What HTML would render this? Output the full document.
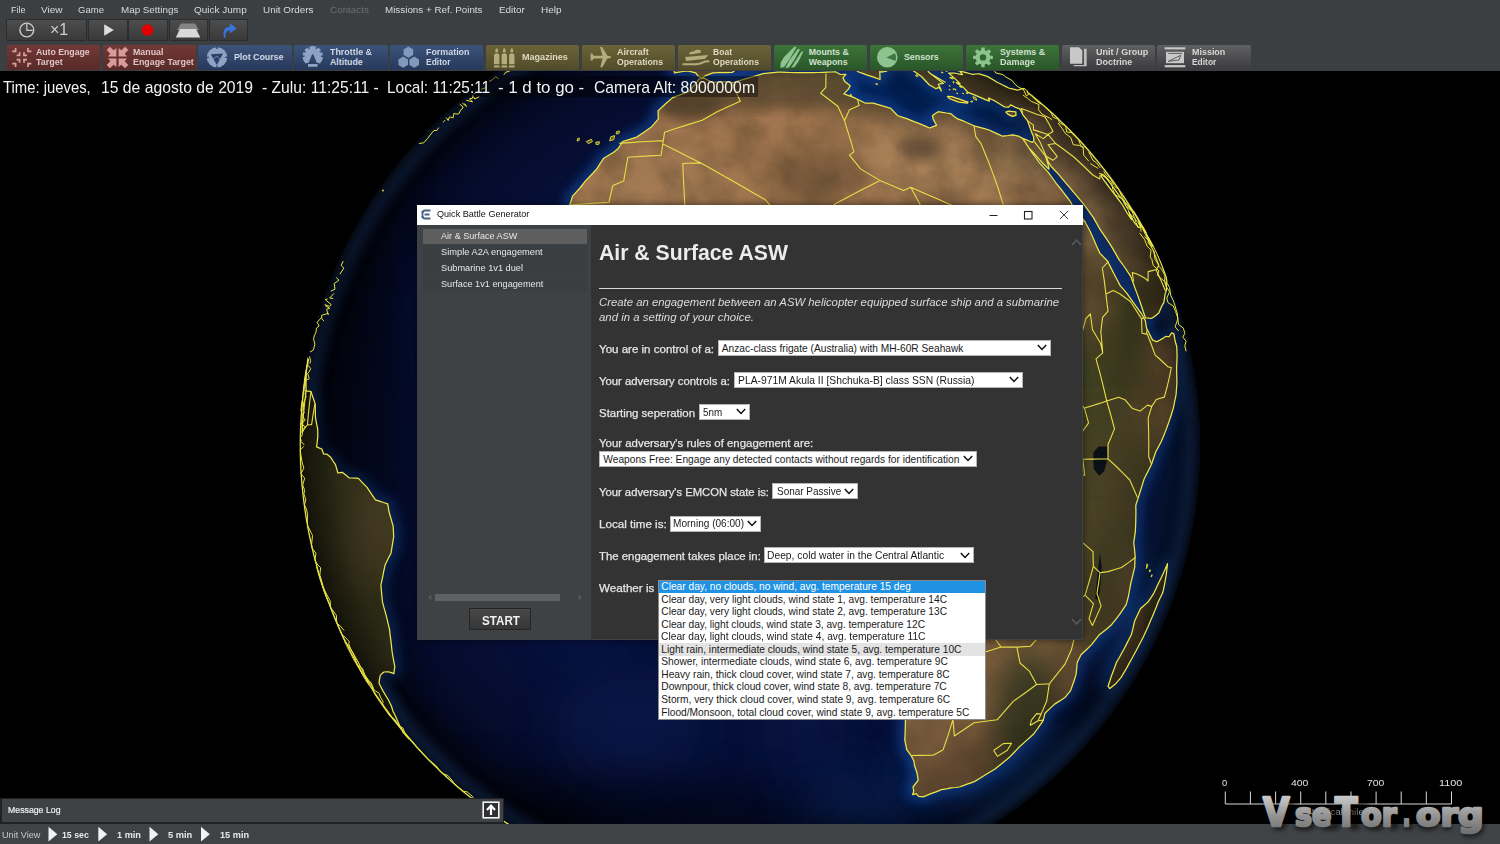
<!DOCTYPE html>
<html><head><meta charset="utf-8"><title>Quick Battle Generator</title>
<style>
html,body{margin:0;padding:0;}
body{width:1500px;height:844px;overflow:hidden;background:#000;position:relative;font-family:"Liberation Sans",sans-serif;}
.abs{position:absolute;}
.t{position:absolute;white-space:pre;line-height:1;transform-origin:0 0;}
#topbar{position:absolute;left:0;top:0;width:1500px;height:70.5px;background:#3c3f42;}
.tb{position:absolute;top:19px;height:22px;background:linear-gradient(#4d4d4d,#3a3a3a);border:1px solid #2c2c2c;box-sizing:border-box;border-radius:1px;}
.cb{position:absolute;top:45.2px;height:25.3px;width:93.3px;box-sizing:border-box;border-radius:2px 2px 0 0;}
.red{background:linear-gradient(#723836,#572b29);}
.blue{background:linear-gradient(#3c537a,#27395b);}
.olive{background:linear-gradient(#6b6439,#514b2a);}
.green{background:linear-gradient(#3d7439,#295629);}
.grey{background:linear-gradient(#606062,#3c3c3e);}
#timebg{position:absolute;left:0;top:76px;width:758px;height:21px;background:rgba(0,0,0,0.42);}
#dlg{position:absolute;left:417px;top:205px;width:666px;height:435px;background:#3f4245;box-shadow:0 0 7px rgba(0,0,0,0.55);}
#dtitle{position:absolute;left:0;top:0;width:666px;height:20px;background:#fff;}
#lpanel{position:absolute;left:1px;top:20px;width:173px;height:414px;background:#3f4245;}
#rpanel{position:absolute;left:174px;top:20px;width:491px;height:414px;background:#333;}
.li{position:absolute;left:423px;width:164px;height:15px;background:#3b3e41;}
.sel{position:absolute;height:16px;background:#fff;border:1px solid #b5b5b5;box-sizing:border-box;}
.sel svg{position:absolute;right:3px;top:3.5px;}
</style></head>
<body>
<svg id="globe" width="1500" height="844" viewBox="0 0 1500 844" style="position:absolute;left:0;top:0">
<defs>
<clipPath id="gc"><circle cx="749.5" cy="445.2" r="450.6"/></clipPath>
<clipPath id="lc"><path d="M699.0 79.0 L704.4 78.2 L711.9 82.4 L718.2 82.0 L724.5 81.5 L732.6 82.7 L737.1 81.3 L741.7 80.0 L746.2 78.7 L751.8 77.0 L757.5 75.3 L763.0 73.7 L767.9 73.1 L772.9 72.6 L777.8 72.1 L782.4 72.2 L786.9 72.3 L791.5 72.5 L796.1 72.6 L801.2 72.6 L806.3 72.7 L811.5 72.7 L819.0 72.5 L823.2 72.3 L827.3 72.1 L831.3 72.0 L835.4 71.8 L840.3 74.5 L845.9 74.4 L842.9 77.8 L844.8 81.6 L850.2 85.8 L848.6 88.9 L843.9 93.9 L848.7 95.6 L853.5 97.4 L859.5 100.2 L865.5 103.2 L873.2 103.2 L879.1 104.9 L885.0 106.6 L890.8 108.4 L897.4 115.5 L902.1 117.1 L906.8 118.7 L913.4 121.3 L920.1 123.9 L924.9 125.9 L929.6 128.0 L933.1 126.6 L936.5 125.3 L933.2 119.1 L932.5 115.6 L935.4 113.6 L938.2 111.7 L942.3 112.3 L946.4 113.0 L950.5 113.6 L957.1 118.7 L963.8 121.2 L968.9 123.5 L974.0 125.8 L977.8 126.8 L981.6 127.9 L985.3 128.9 L989.0 130.0 L993.6 132.1 L998.1 134.1 L1002.6 136.2 L1005.3 135.8 L1008.0 135.5 L1010.6 135.1 L1013.1 134.8 L1018.7 136.2 L1022.6 138.4 L1025.9 143.4 L1029.3 148.5 L1031.9 152.5 L1035.6 157.5 L1039.3 162.6 L1043.9 167.6 L1048.5 172.7 L1052.4 178.0 L1056.2 183.4 L1060.0 188.0 L1063.6 192.7 L1067.3 197.5 L1070.9 202.3 L1073.0 206.7 L1075.1 211.2 L1079.5 215.5 L1083.7 219.8 L1087.0 225.5 L1090.1 231.2 L1093.0 237.8 L1095.9 244.4 L1099.8 253.1 L1103.7 257.1 L1107.4 261.0 L1111.1 268.1 L1114.7 275.2 L1117.4 280.3 L1120.0 285.4 L1123.5 289.4 L1126.9 293.4 L1130.8 298.8 L1134.7 304.3 L1138.3 309.3 L1141.8 314.2 L1145.3 320.6 L1146.6 328.4 L1149.6 334.2 L1152.6 340.1 L1154.7 340.9 L1156.7 341.8 L1158.4 340.9 L1160.0 340.0 L1161.5 339.1 L1163.0 338.2 L1164.4 337.3 L1165.7 336.4 L1167.5 336.5 L1169.2 336.5 L1170.5 334.7 L1171.7 332.9 L1173.8 333.6 L1175.1 341.0 L1176.8 346.8 L1176.9 351.3 L1177.1 355.8 L1176.9 362.1 L1176.6 368.6 L1176.7 373.3 L1176.8 378.0 L1176.9 382.8 L1176.5 388.5 L1176.1 394.3 L1174.8 401.0 L1173.4 407.9 L1172.0 412.5 L1170.5 417.2 L1168.9 421.9 L1167.2 426.7 L1165.4 431.4 L1163.5 436.2 L1161.5 441.0 L1158.8 446.2 L1155.9 451.5 L1153.7 457.8 L1151.5 464.2 L1147.8 471.7 L1144.0 479.3 L1142.4 484.6 L1140.7 490.0 L1138.3 497.6 L1135.8 505.2 L1135.9 512.5 L1135.8 519.8 L1135.6 526.0 L1135.3 532.2 L1134.5 537.4 L1133.7 542.6 L1134.5 549.0 L1135.1 555.4 L1134.9 561.3 L1134.7 567.2 L1133.5 572.2 L1132.3 577.3 L1131.0 582.3 L1130.1 587.1 L1129.2 592.0 L1128.3 596.8 L1126.2 604.6 L1119.8 614.2 L1115.6 619.7 L1111.2 625.1 L1107.3 628.4 L1103.2 631.7 L1099.0 635.1 L1091.6 644.6 L1086.4 649.7 L1081.0 654.8 L1077.2 662.5 L1076.7 668.5 L1076.1 674.4 L1074.3 680.0 L1072.4 685.5 L1070.5 690.9 L1064.9 697.6 L1059.8 700.9 L1054.6 704.1 L1049.8 708.6 L1045.0 713.2 L1044.0 717.1 L1043.0 720.9 L1040.0 725.2 L1037.0 729.5 L1033.9 733.7 L1030.9 736.5 L1025.2 741.6 L1019.5 746.7 L1014.3 752.2 L1009.1 757.6 L1001.9 763.4 L994.7 769.2 L986.7 774.0 L980.8 777.7 L974.8 781.4 L971.0 782.8 L967.1 784.2 L963.3 785.6 L959.4 787.0 L955.3 787.5 L951.1 787.9 L946.4 788.8 L941.6 789.6 L936.0 791.8 L930.4 793.9 L923.4 796.9 L918.6 796.4 L916.2 793.6 L912.7 794.7 L913.7 790.8 L913.0 787.0 L918.1 780.3 L917.6 776.6 L917.0 772.8 L915.8 769.3 L914.6 765.8 L913.8 760.7 L911.1 755.6 L906.7 749.7 L905.8 744.9 L904.8 740.1 L905.0 735.6 L905.2 731.0 L905.3 726.3 L905.4 721.9 L905.5 717.5 L905.5 712.9 L905.4 708.3 L904.8 701.9 L901.7 697.4 L899.2 691.3 L896.7 685.1 L895.1 680.2 L893.4 675.3 L891.7 670.3 L890.0 664.6 L888.3 658.8 L886.5 653.0 L887.2 647.1 L887.9 641.1 L890.1 635.6 L892.4 630.0 L894.4 624.1 L896.5 618.0 L898.6 612.0 L904.1 606.1 L909.6 600.2 L912.6 592.1 L915.5 583.9 L914.4 577.0 L913.3 570.1 L912.2 563.0 L910.9 556.0 L909.2 548.3 L907.3 540.6 L904.9 532.2 L902.4 523.7 L901.6 515.2 L897.1 508.0 L889.2 497.0 L883.5 490.9 L877.6 484.7 L871.7 478.5 L867.0 467.3 L862.2 457.3 L868.3 451.0 L869.5 443.5 L871.9 434.8 L874.2 424.8 L874.8 418.5 L875.3 412.3 L874.0 405.4 L872.6 398.6 L862.9 391.0 L855.6 392.2 L847.7 392.8 L839.8 393.4 L833.6 393.9 L827.5 394.5 L819.9 383.3 L814.2 376.4 L808.5 369.5 L801.7 368.9 L794.9 368.2 L788.6 368.8 L782.4 369.4 L774.9 370.6 L767.4 371.8 L758.7 375.5 L749.9 379.3 L743.6 382.4 L737.3 385.5 L726.0 389.3 L714.7 384.3 L708.5 383.1 L702.2 381.9 L696.0 382.5 L689.8 383.2 L682.9 385.1 L676.1 387.0 L669.5 389.1 L662.9 391.3 L656.3 393.4 L645.5 386.0 L638.3 381.7 L631.2 377.5 L625.3 373.9 L619.5 370.3 L611.6 363.1 L605.9 360.1 L600.2 357.2 L596.5 350.6 L592.9 344.1 L590.4 338.2 L588.0 332.3 L583.3 326.6 L578.8 320.9 L574.9 315.2 L569.3 305.0 L563.7 302.4 L558.1 299.8 L558.0 291.9 L560.6 287.3 L559.5 279.6 L552.9 274.5 L558.8 268.7 L565.3 259.6 L568.1 254.1 L571.0 248.6 L572.4 242.7 L573.8 236.8 L573.4 230.2 L573.0 223.6 L572.5 215.6 L568.7 210.0 L569.7 205.0 L572.5 196.2 L580.0 188.0 L585.3 181.1 L590.9 175.2 L596.5 169.3 L600.1 163.7 L603.7 158.2 L613.6 152.2 L618.2 148.5 L622.6 141.5 L629.6 139.3 L636.7 137.1 L643.9 132.2 L651.0 127.3 L654.7 123.2 L658.3 119.1 L658.2 114.9 L658.1 110.8 L664.8 104.5 L672.6 97.6 L681.3 94.4 L689.0 91.3 L692.4 87.4 L695.6 83.7Z M1167.5 563.7 L1166.9 569.5 L1166.2 575.2 L1165.4 579.6 L1164.6 584.1 L1163.7 588.5 L1162.7 592.8 L1158.3 601.8 L1156.4 606.7 L1154.4 611.7 L1152.4 616.6 L1150.2 621.6 L1148.0 626.7 L1145.7 631.7 L1143.4 636.7 L1141.1 641.2 L1138.7 645.8 L1136.4 650.3 L1133.9 654.8 L1131.5 659.3 L1128.9 663.9 L1126.3 668.6 L1123.6 673.1 L1120.9 677.7 L1115.4 684.1 L1112.6 686.3 L1109.8 688.5 L1108.9 687.3 L1108.0 686.2 L1109.9 680.8 L1111.6 675.4 L1113.3 671.1 L1114.9 666.7 L1116.5 662.3 L1119.2 657.7 L1121.8 653.0 L1124.4 648.3 L1126.8 643.6 L1129.1 639.0 L1131.5 634.2 L1132.6 629.9 L1133.6 625.5 L1134.6 621.1 L1137.6 614.8 L1140.5 608.5 L1143.2 606.2 L1145.8 603.9 L1148.3 601.7 L1151.2 597.4 L1153.9 593.1 L1156.5 587.5 L1159.1 582.0 L1161.8 576.4 L1164.5 570.8Z M1029.3 148.5 L1025.9 143.4 L1022.6 138.4 L1025.9 139.7 L1029.1 141.0 L1032.3 142.3 L1033.9 140.9 L1033.6 136.7 L1031.5 132.0 L1030.3 128.6 L1029.1 125.3 L1027.4 120.6 L1023.1 115.2 L1021.5 112.0 L1019.8 108.9 L1016.3 107.7 L1010.6 104.9 L1008.7 107.2 L1004.6 107.0 L999.4 103.7 L994.0 100.5 L988.5 98.0 L989.4 101.2 L984.8 99.3 L980.2 97.4 L974.4 94.9 L967.9 92.4 L963.2 87.2 L956.3 82.7 L960.1 83.6 L954.9 78.6 L948.6 73.0 L951.3 73.0 L954.0 73.0 L956.8 73.5 L959.6 74.1 L962.4 74.6 L959.8 71.1 L963.1 71.9 L966.3 72.7 L969.5 73.5 L972.6 74.3 L974.4 74.1 L976.1 74.0 L977.9 73.9 L979.5 73.9 L982.3 74.8 L985.1 75.7 L987.8 76.6 L992.7 79.5 L997.5 82.5 L1000.3 83.8 L1003.1 85.2 L1005.9 86.6 L1008.6 88.0 L1010.2 88.4 L1011.8 88.7 L1013.3 89.1 L1014.8 89.4 L1016.3 89.8 L1017.7 90.2 L1018.4 90.0 L1019.1 89.7 L1019.7 89.5 L1020.3 89.4 L1020.8 89.2 L1021.3 89.0 L1021.8 88.8 L1022.2 88.8 L1022.7 88.7 L1023.1 88.6 L1023.4 88.6 L1023.7 88.5 L1024.0 88.5 L1024.2 88.5 L1024.4 88.4 L1024.5 88.4 L1024.6 88.4 L1025.8 89.3 L1027.1 90.2 L1027.4 92.2 L1028.6 93.2 L1029.7 94.1 L1030.9 95.0 L1032.0 95.8 L1033.0 96.7 L1034.1 97.6 L1035.1 98.4 L1036.1 99.3 L1037.1 100.1 L1038.1 100.9 L1039.1 101.7 L1040.0 102.5 L1040.9 103.3 L1041.8 104.1 L1042.7 104.8 L1043.5 105.5 L1044.4 106.3 L1046.7 108.3 L1048.9 110.3 L1051.2 112.3 L1053.4 114.3 L1055.6 116.3 L1057.7 118.3 L1059.8 120.4 L1061.9 122.4 L1064.0 124.4 L1066.1 126.4 L1068.1 128.4 L1070.1 130.5 L1072.0 132.5 L1074.0 134.5 L1075.9 136.5 L1077.8 138.5 L1079.7 140.5 L1081.5 142.5 L1083.3 144.5 L1085.1 146.5 L1087.7 149.5 L1090.3 152.5 L1092.9 155.5 L1095.4 158.6 L1098.0 161.7 L1100.5 164.8 L1102.9 167.9 L1105.4 171.0 L1107.8 174.2 L1110.2 177.4 L1112.6 180.6 L1114.9 183.9 L1117.3 187.2 L1119.5 190.5 L1121.8 193.8 L1124.0 197.1 L1126.3 200.5 L1128.4 203.9 L1130.6 207.3 L1132.7 210.7 L1134.8 214.2 L1136.9 217.7 L1138.9 221.2 L1140.9 224.7 L1142.9 228.3 L1144.8 231.8 L1146.8 235.4 L1148.6 239.0 L1150.5 242.6 L1152.3 246.3 L1151.9 245.5 L1151.5 244.7 L1151.1 243.8 L1150.7 243.0 L1150.2 242.1 L1149.8 241.2 L1149.3 240.3 L1149.0 239.8 L1148.8 239.3 L1148.5 238.8 L1148.2 238.2 L1147.9 237.6 L1147.6 237.1 L1147.3 236.4 L1147.0 235.8 L1146.6 235.2 L1145.9 233.9 L1146.4 231.9 L1145.7 230.6 L1144.9 229.3 L1144.1 227.9 L1143.2 226.6 L1142.2 225.3 L1141.2 223.9 L1138.8 219.7 L1136.2 215.5 L1133.7 211.3 L1133.4 211.5 L1133.1 211.7 L1132.7 212.0 L1130.7 209.4 L1128.7 206.8 L1126.6 204.2 L1124.4 201.6 L1122.1 199.1 L1119.8 196.5 L1116.7 192.3 L1113.7 188.0 L1110.0 183.0 L1106.2 178.0 L1104.0 176.2 L1101.8 174.4 L1101.0 175.7 L1103.3 179.4 L1106.8 184.0 L1110.2 188.6 L1114.4 194.1 L1118.5 199.5 L1122.6 205.0 L1124.8 209.0 L1127.1 213.0 L1131.6 219.6 L1130.3 215.9 L1129.0 212.2 L1131.6 217.2 L1134.2 222.3 L1136.2 224.7 L1138.2 227.1 L1139.2 227.3 L1140.1 227.5 L1140.9 227.7 L1139.3 223.0 L1138.3 220.3 L1137.2 217.7 L1140.0 222.7 L1142.8 227.8 L1145.4 232.3 L1148.0 236.9 L1149.5 239.1 L1150.9 241.4 L1153.7 246.6 L1156.3 251.8 L1157.9 255.5 L1159.5 259.2 L1161.0 262.9 L1162.4 266.7 L1164.3 271.9 L1166.1 277.1 L1166.5 279.3 L1166.9 281.6 L1166.7 282.6 L1166.4 283.6 L1166.5 285.5 L1166.5 287.5 L1166.5 289.5 L1166.1 291.1 L1165.6 292.7 L1165.0 294.4 L1164.7 297.0 L1164.3 299.7 L1163.9 302.4 L1162.8 304.4 L1161.6 306.4 L1160.7 308.6 L1159.8 310.8 L1158.8 313.1 L1157.5 314.1 L1156.2 315.2 L1154.8 316.2 L1153.3 317.3 L1151.8 318.3 L1149.1 318.2 L1146.4 318.0 L1145.5 317.8 L1143.3 311.8 L1141.7 306.8 L1140.0 301.8 L1138.3 296.9 L1135.0 288.1 L1132.9 282.2 L1130.7 276.4 L1124.5 267.0 L1119.0 259.6 L1116.2 254.6 L1113.3 249.6 L1110.3 244.7 L1107.0 239.7 L1103.6 234.7 L1100.2 229.7 L1096.8 223.6 L1093.4 217.6 L1088.9 211.3 L1084.4 205.1 L1080.3 200.2 L1076.3 195.4 L1068.9 186.7 L1063.6 180.3 L1058.2 173.9 L1051.9 167.3 L1048.3 162.2 L1046.1 156.3 L1045.5 156.2 L1046.7 159.8 L1047.8 163.4 L1048.9 167.1 L1048.9 169.2 L1042.9 163.5 L1038.1 158.1 L1031.3 150.4Z M674.5 72.8 L678.9 72.2 L683.2 71.5 L687.6 70.9 L691.6 71.9 L695.7 72.9 L698.5 76.5 L701.8 77.6 L707.5 74.9 L713.0 72.9 L719.1 72.7 L725.2 72.6 L732.2 72.5 L737.6 68.2 L745.4 66.9 L749.3 63.7 L753.1 60.6 L748.9 56.2 L751.9 53.5 L754.9 50.9 L757.8 48.4 L762.5 47.3 L767.2 46.3 L771.8 45.2 L776.4 44.3 L775.6 41.0 L774.7 37.8 L779.5 37.9 L784.3 38.1 L789.1 38.3 L792.7 38.0 L796.3 37.7 L799.9 37.5 L803.5 37.2 L807.0 37.0 L810.4 36.4 L813.7 35.8 L817.0 35.2 L821.4 37.4 L825.8 39.8 L830.4 42.2 L835.6 44.5 L841.0 47.0 L846.4 49.5 L851.2 51.4 L856.2 53.4 L861.1 55.3 L866.0 57.2 L870.9 59.1 L875.8 61.0 L878.3 63.9 L880.8 66.8 L881.1 69.5 L881.3 72.2 L886.6 71.2 L889.1 67.8 L882.6 63.4 L883.9 59.6 L889.7 62.1 L895.4 64.7 L895.3 62.2 L890.8 60.1 L886.3 58.0 L881.9 56.0 L877.4 54.0 L873.0 52.1 L869.0 50.8 L864.9 49.5 L860.9 48.2 L856.9 47.0 L853.7 44.2 L850.6 41.5 L846.0 39.8 L841.5 38.1 L839.9 35.8 L838.3 33.5 L842.7 33.4 L847.0 33.3 L853.4 35.5 L857.4 37.9 L861.5 40.4 L866.3 42.3 L871.1 44.3 L875.9 46.4 L880.1 48.1 L884.3 49.8 L888.6 51.6 L896.7 55.5 L899.0 59.0 L901.3 62.6 L909.9 68.4 L915.5 72.3 L921.1 76.3 L925.2 80.5 L929.2 84.7 L936.0 88.7 L938.5 87.4 L941.0 89.5 L938.3 84.2 L943.4 83.5 L936.3 78.1 L928.8 72.2 L927.0 69.4 L925.1 66.8 L928.1 66.7 L931.1 66.6 L935.0 67.2 L938.8 67.9 L942.6 68.6 L946.7 71.3 L948.4 69.1 L951.9 69.7 L955.3 70.2 L958.7 70.8 L949.9 65.4 L945.1 61.6 L945.4 59.8 L945.7 58.1 L945.2 56.3 L944.7 54.6 L944.1 52.9 L941.8 50.7 L939.5 48.5 L937.2 46.5 L934.9 44.5 L932.6 42.5 L930.3 40.6 L928.0 38.8 L925.6 37.0 L923.3 35.3 L920.4 34.2 L917.4 33.1 L914.5 32.1 L911.5 31.1 L908.6 30.0 L905.6 29.0 L902.6 28.0 L899.7 27.1 L896.7 26.1 L893.7 25.2 L890.7 24.2 L887.7 23.3 L884.7 22.4 L881.7 21.6 L878.7 20.7 L875.7 19.9 L872.6 19.0 L869.6 18.2 L866.6 17.4 L863.6 16.6 L860.6 15.9 L857.6 15.1 L854.6 14.4 L851.6 13.6 L848.6 12.9 L845.6 12.3 L842.6 11.6 L839.6 10.9 L836.6 10.3 L833.7 9.7 L830.7 9.1 L827.8 8.5 L824.8 7.9 L821.9 7.4 L819.0 6.8 L816.0 6.3 L813.1 5.8 L810.2 5.3 L807.4 4.8 L804.5 4.4 L802.2 4.4 L799.8 4.5 L797.4 4.6 L794.9 4.7 L792.4 4.9 L789.9 5.0 L787.3 5.2 L784.7 5.4 L782.1 5.6 L779.4 5.8 L776.7 6.0 L774.0 6.3 L771.2 6.5 L768.4 6.8 L765.6 7.1 L762.7 7.4 L759.8 7.8 L756.9 8.1 L753.9 8.5 L750.9 8.9 L747.9 9.3 L744.8 9.7 L741.7 10.2 L738.6 10.6 L735.4 11.1 L732.3 11.6 L729.1 12.1 L725.8 12.7 L722.6 13.3 L719.3 13.8 L719.9 15.3 L720.5 16.9 L721.2 18.5 L724.5 19.7 L728.0 20.9 L731.5 22.2 L735.1 23.6 L738.8 25.0 L742.6 26.4 L741.7 28.4 L740.7 30.5 L739.7 32.6 L738.7 34.8 L737.6 37.1 L733.7 37.0 L729.8 37.0 L725.9 37.0 L722.1 37.0 L718.2 37.0 L714.4 37.0 L710.5 37.0 L706.7 37.1 L702.9 37.2 L699.1 37.2 L695.3 37.3 L691.5 37.5 L686.6 39.3 L681.6 41.2 L681.7 43.4 L681.9 45.7 L682.1 48.1 L682.3 50.5 L679.8 53.4 L677.4 56.4 L674.9 59.5 L672.4 62.6 L673.1 66.0 L673.8 69.4Z M855.3 69.4 L862.0 69.0 L866.5 69.3 L870.9 69.6 L875.3 70.0 L879.7 70.4 L879.9 74.0 L880.0 77.7 L880.0 79.5 L872.9 76.9 L868.1 75.3 L863.3 73.6 L858.6 72.0Z M816.6 51.0 L820.2 50.5 L823.9 50.0 L829.0 53.8 L829.7 57.2 L830.4 60.7 L825.9 61.5 L820.8 60.1 L819.9 57.1 L819.1 54.2Z M947.5 96.4 L952.0 96.7 L956.1 98.1 L960.2 99.4 L964.2 100.8 L968.0 102.2 L967.4 103.2 L963.2 102.7 L958.9 102.1 L954.1 100.3 L949.3 98.5Z M1005.9 112.0 L1008.5 111.2 L1011.0 111.4 L1013.5 111.6 L1015.9 111.9 L1015.9 115.4 L1014.1 115.9 L1012.2 116.4 L1007.8 114.1Z M307.6 357.9 L307.4 359.7 L307.3 361.6 L306.7 365.8 L306.1 370.1 L306.2 371.9 L306.4 373.8 L306.1 378.9 L306.0 384.0 L306.1 391.0 L306.7 391.0 L307.4 391.0 L308.1 391.0 L308.9 391.1 L309.9 391.3 L311.0 391.5 L311.8 394.1 L312.7 396.8 L313.7 399.4 L315.2 404.0 L315.3 410.7 L315.5 417.5 L316.5 423.3 L317.7 429.1 L317.8 437.0 L317.2 442.0 L316.6 446.9 L318.3 447.6 L320.1 448.3 L321.9 449.0 L323.6 454.0 L325.2 454.1 L327.0 454.2 L328.8 455.7 L330.7 457.3 L333.0 461.0 L335.5 464.7 L337.9 473.0 L340.0 472.6 L342.2 472.3 L344.5 474.1 L346.9 476.0 L349.3 477.9 L352.3 478.0 L355.3 478.2 L358.4 478.4 L361.2 481.4 L364.1 484.4 L367.1 487.4 L371.2 493.6 L375.5 499.8 L379.5 501.1 L383.5 502.5 L387.7 503.8 L389.0 511.5 L391.0 518.7 L393.1 525.9 L393.4 531.3 L393.7 536.6 L392.8 542.2 L391.9 547.7 L391.0 553.2 L388.0 559.0 L385.2 564.7 L383.8 571.0 L382.6 577.3 L380.9 584.8 L381.4 590.6 L381.9 596.4 L382.5 602.2 L383.9 607.4 L385.4 612.6 L386.8 617.8 L388.2 623.9 L389.6 629.9 L390.2 635.7 L391.0 641.4 L391.6 647.0 L392.2 652.5 L393.0 657.2 L393.9 661.9 L394.8 666.6 L394.3 670.2 L393.9 673.7 L391.2 672.7 L388.6 671.8 L386.3 671.9 L384.0 672.0 L382.7 673.1 L381.5 674.1 L380.4 675.1 L379.9 677.0 L379.6 678.8 L379.3 680.7 L379.1 683.5 L381.1 687.3 L383.1 691.1 L385.7 695.5 L388.3 699.8 L391.4 706.0 L392.9 711.0 L395.3 715.8 L396.6 718.8 L397.9 721.7 L399.6 725.5 L401.3 728.3 L403.0 731.0 L404.7 733.7 L405.9 735.5 L407.1 737.4 L408.3 739.1 L406.8 737.6 L405.4 736.0 L404.0 734.4 L402.7 732.9 L402.5 730.5 L401.2 729.0 L404.5 733.0 L407.8 736.9 L413.0 742.8 L415.6 745.7 L418.2 748.6 L420.8 751.5 L421.1 751.7 L421.3 752.0 L421.6 752.3 L421.9 752.6 L421.3 752.0 L420.7 751.4 L420.2 750.8 L419.7 750.2 L419.2 749.7 L422.3 753.0 L425.4 756.3 L428.6 759.6 L428.0 759.0 L427.5 758.4 L426.9 757.9 L426.4 757.4 L425.9 756.9 L429.2 760.2 L432.5 763.6 L435.9 766.9 L438.2 769.1 L440.6 771.4 L443.0 773.6 L445.4 775.8 L447.8 778.0 L449.3 779.4 L450.8 780.8 L452.3 782.1 L453.9 783.5 L457.6 786.7 L461.2 789.8 L465.0 792.9 L467.3 794.7 L469.6 796.6 L471.9 798.4 L474.3 800.3 L476.7 802.1 L479.1 803.9 L483.8 807.4 L488.5 810.8 L491.9 813.2 L495.3 815.6 L498.8 818.0 L502.3 820.3 L505.8 822.6 L509.3 824.9 L508.2 824.1 L507.0 823.4 L505.9 822.7 L504.8 822.0 L503.7 821.3 L502.6 820.5 L501.6 819.8 L500.5 819.1 L499.5 818.4 L498.5 817.8 L497.5 817.1 L496.5 816.4 L495.5 815.7 L494.5 815.1 L491.7 813.1 L488.8 811.1 L486.0 809.1 L483.2 807.0 L480.4 805.0 L477.7 802.9 L475.0 800.8 L472.3 798.7 L469.6 796.6 L467.0 794.5 L464.4 792.4 L461.8 790.2 L459.2 788.1 L456.7 785.9 L454.2 783.7 L451.7 781.5 L448.7 778.9 L445.7 776.2 L442.8 773.5 L439.9 770.7 L437.0 767.9 L434.1 765.1 L431.3 762.3 L428.4 759.4 L425.7 756.6 L422.9 753.7 L420.2 750.7 L417.4 747.8 L414.8 744.8 L412.1 741.8 L409.5 738.8 L406.9 735.8 L404.3 732.7 L401.7 729.6 L399.2 726.5 L396.7 723.4 L394.3 720.2 L391.8 717.1 L389.4 713.9 L387.1 710.6 L384.7 707.4 L382.4 704.2 L380.1 700.9 L377.9 697.6 L375.6 694.3 L373.4 691.0 L371.3 687.6 L369.1 684.3 L367.0 680.9 L365.0 677.5 L362.9 674.1 L360.9 670.7 L359.0 667.2 L357.0 663.8 L355.1 660.4 L353.3 656.9 L351.4 653.5 L349.6 650.0 L347.9 646.5 L346.1 642.9 L344.4 639.4 L342.7 635.9 L341.1 632.3 L339.4 628.7 L337.9 625.1 L336.3 621.5 L334.8 617.9 L333.3 614.2 L331.8 610.6 L330.4 606.9 L329.0 603.3 L327.6 599.6 L326.3 595.9 L325.0 592.2 L323.7 588.4 L322.5 584.7 L321.3 581.0 L320.1 577.2 L318.9 573.5 L317.8 569.7 L316.8 565.9 L315.7 562.1 L314.7 558.3 L313.7 554.5 L312.8 550.7 L311.9 546.8 L311.0 543.0 L310.2 539.2 L309.4 535.3 L308.6 531.4 L307.9 527.6 L307.2 523.7 L306.5 519.8 L305.9 516.0 L305.3 512.1 L304.7 508.2 L304.2 504.3 L303.7 500.4 L303.2 496.5 L302.8 492.5 L302.4 488.6 L302.0 484.7 L301.7 480.8 L301.4 476.9 L301.1 472.9 L300.9 469.0 L300.7 465.1 L300.5 461.1 L300.4 457.2 L300.3 453.3 L300.3 449.3 L300.3 445.4 L300.3 441.5 L300.3 437.5 L300.4 433.6 L300.5 429.7 L300.7 425.7 L300.9 421.7 L301.1 417.8 L301.4 413.8 L301.6 409.8 L302.0 405.8 L302.4 401.8 L302.8 397.7 L303.2 393.7 L303.7 389.6 L304.2 385.6 L304.8 381.5 L305.4 377.4 L306.0 373.3 L306.7 369.1 L307.5 365.0 L307.5 364.8 L307.5 364.6 L307.6 364.5 L307.6 364.3 L307.6 364.1 L307.7 363.9 L307.7 363.7 L307.8 363.4 L307.8 363.2 L307.8 363.0 L307.9 362.7 L307.9 362.5 L308.0 362.2 L308.0 362.0 L308.1 361.7 L308.1 361.4 L308.2 361.1 L308.2 360.8 L308.3 360.5 L308.4 360.2 L308.4 359.9 L308.5 359.5 L307.2 358.9 L307.3 358.6 L307.5 358.2Z"/></clipPath>
<radialGradient id="og" cx="50%" cy="50%" r="50%"><stop offset="0" stop-color="#081340"/><stop offset="0.7" stop-color="#060f36"/><stop offset="0.9" stop-color="#040a28"/><stop offset="1" stop-color="#01030c"/></radialGradient>
<radialGradient id="lg" cx="50%" cy="50%" r="50%"><stop offset="0" stop-color="#000" stop-opacity="0"/><stop offset="0.84" stop-color="#000" stop-opacity="0"/><stop offset="0.93" stop-color="#000" stop-opacity="0.25"/><stop offset="0.975" stop-color="#000" stop-opacity="0.6"/><stop offset="1" stop-color="#000" stop-opacity="0.95"/></radialGradient>
<radialGradient id="lg2" cx="50%" cy="50%" r="50%"><stop offset="0" stop-color="#000" stop-opacity="0"/><stop offset="0.78" stop-color="#000" stop-opacity="0"/><stop offset="0.92" stop-color="#000" stop-opacity="0.28"/><stop offset="1" stop-color="#000" stop-opacity="0.7"/></radialGradient>
<filter id="nz" x="0" y="0" width="100%" height="100%"><feTurbulence type="fractalNoise" baseFrequency="0.03" numOctaves="4" seed="7"/><feColorMatrix type="matrix" values="0 0 0 0 0.08  0 0 0 0 0.05  0 0 0 0 0.02  1.6 1.2 0 0 -1.05"/></filter>
<filter id="b6" x="-30%" y="-30%" width="160%" height="160%"><feGaussianBlur stdDeviation="6"/></filter>
<filter id="b14" x="-50%" y="-50%" width="200%" height="200%"><feGaussianBlur stdDeviation="14"/></filter>
<filter id="b25" x="-50%" y="-50%" width="200%" height="200%"><feGaussianBlur stdDeviation="25"/></filter>
</defs>
<g clip-path="url(#gc)">
<circle cx="749.5" cy="445.2" r="450.6" fill="url(#og)"/>
<ellipse cx="582" cy="510" rx="50" ry="150" fill="#0e2060" opacity="0.4" filter="url(#b25)"/>
<ellipse cx="627" cy="729" rx="70" ry="60" fill="#0e2060" opacity="0.35" filter="url(#b25)"/>
<ellipse cx="711" cy="839" rx="120" ry="30" fill="#0d1f5c" opacity="0.3" filter="url(#b25)"/>
<ellipse cx="473" cy="332" rx="50" ry="70" fill="#0d1f5c" opacity="0.3" filter="url(#b25)"/>
<ellipse cx="805" cy="732" rx="40" ry="70" fill="#0c1d56" opacity="0.3" filter="url(#b25)"/>
<ellipse cx="856" cy="812" rx="60" ry="40" fill="#103070" opacity="0.45" filter="url(#b25)"/>
<ellipse cx="906" cy="90" rx="150" ry="16" fill="#0d3a86" opacity="0.9" filter="url(#b25)"/>
<ellipse cx="997" cy="116" rx="60" ry="14" fill="#0d3a86" opacity="0.8" filter="url(#b25)"/>
<ellipse cx="1125" cy="628" rx="30" ry="90" fill="#123c82" opacity="0.65" filter="url(#b25)"/>
<ellipse cx="1040" cy="773" rx="140" ry="50" fill="#11377a" opacity="0.6" filter="url(#b25)"/>
<ellipse cx="1182" cy="524" rx="40" ry="160" fill="#10326f" opacity="0.45" filter="url(#b25)"/>
<ellipse cx="1185" cy="353" rx="30" ry="60" fill="#10326f" opacity="0.4" filter="url(#b25)"/>
<path d="M699.0 79.0 L704.4 78.2 L711.9 82.4 L718.2 82.0 L724.5 81.5 L732.6 82.7 L737.1 81.3 L741.7 80.0 L746.2 78.7 L751.8 77.0 L757.5 75.3 L763.0 73.7 L767.9 73.1 L772.9 72.6 L777.8 72.1 L782.4 72.2 L786.9 72.3 L791.5 72.5 L796.1 72.6 L801.2 72.6 L806.3 72.7 L811.5 72.7 L819.0 72.5 L823.2 72.3 L827.3 72.1 L831.3 72.0 L835.4 71.8 L840.3 74.5 L845.9 74.4 L842.9 77.8 L844.8 81.6 L850.2 85.8 L848.6 88.9 L843.9 93.9 L848.7 95.6 L853.5 97.4 L859.5 100.2 L865.5 103.2 L873.2 103.2 L879.1 104.9 L885.0 106.6 L890.8 108.4 L897.4 115.5 L902.1 117.1 L906.8 118.7 L913.4 121.3 L920.1 123.9 L924.9 125.9 L929.6 128.0 L933.1 126.6 L936.5 125.3 L933.2 119.1 L932.5 115.6 L935.4 113.6 L938.2 111.7 L942.3 112.3 L946.4 113.0 L950.5 113.6 L957.1 118.7 L963.8 121.2 L968.9 123.5 L974.0 125.8 L977.8 126.8 L981.6 127.9 L985.3 128.9 L989.0 130.0 L993.6 132.1 L998.1 134.1 L1002.6 136.2 L1005.3 135.8 L1008.0 135.5 L1010.6 135.1 L1013.1 134.8 L1018.7 136.2 L1022.6 138.4 L1025.9 143.4 L1029.3 148.5 L1031.9 152.5 L1035.6 157.5 L1039.3 162.6 L1043.9 167.6 L1048.5 172.7 L1052.4 178.0 L1056.2 183.4 L1060.0 188.0 L1063.6 192.7 L1067.3 197.5 L1070.9 202.3 L1073.0 206.7 L1075.1 211.2 L1079.5 215.5 L1083.7 219.8 L1087.0 225.5 L1090.1 231.2 L1093.0 237.8 L1095.9 244.4 L1099.8 253.1 L1103.7 257.1 L1107.4 261.0 L1111.1 268.1 L1114.7 275.2 L1117.4 280.3 L1120.0 285.4 L1123.5 289.4 L1126.9 293.4 L1130.8 298.8 L1134.7 304.3 L1138.3 309.3 L1141.8 314.2 L1145.3 320.6 L1146.6 328.4 L1149.6 334.2 L1152.6 340.1 L1154.7 340.9 L1156.7 341.8 L1158.4 340.9 L1160.0 340.0 L1161.5 339.1 L1163.0 338.2 L1164.4 337.3 L1165.7 336.4 L1167.5 336.5 L1169.2 336.5 L1170.5 334.7 L1171.7 332.9 L1173.8 333.6 L1175.1 341.0 L1176.8 346.8 L1176.9 351.3 L1177.1 355.8 L1176.9 362.1 L1176.6 368.6 L1176.7 373.3 L1176.8 378.0 L1176.9 382.8 L1176.5 388.5 L1176.1 394.3 L1174.8 401.0 L1173.4 407.9 L1172.0 412.5 L1170.5 417.2 L1168.9 421.9 L1167.2 426.7 L1165.4 431.4 L1163.5 436.2 L1161.5 441.0 L1158.8 446.2 L1155.9 451.5 L1153.7 457.8 L1151.5 464.2 L1147.8 471.7 L1144.0 479.3 L1142.4 484.6 L1140.7 490.0 L1138.3 497.6 L1135.8 505.2 L1135.9 512.5 L1135.8 519.8 L1135.6 526.0 L1135.3 532.2 L1134.5 537.4 L1133.7 542.6 L1134.5 549.0 L1135.1 555.4 L1134.9 561.3 L1134.7 567.2 L1133.5 572.2 L1132.3 577.3 L1131.0 582.3 L1130.1 587.1 L1129.2 592.0 L1128.3 596.8 L1126.2 604.6 L1119.8 614.2 L1115.6 619.7 L1111.2 625.1 L1107.3 628.4 L1103.2 631.7 L1099.0 635.1 L1091.6 644.6 L1086.4 649.7 L1081.0 654.8 L1077.2 662.5 L1076.7 668.5 L1076.1 674.4 L1074.3 680.0 L1072.4 685.5 L1070.5 690.9 L1064.9 697.6 L1059.8 700.9 L1054.6 704.1 L1049.8 708.6 L1045.0 713.2 L1044.0 717.1 L1043.0 720.9 L1040.0 725.2 L1037.0 729.5 L1033.9 733.7 L1030.9 736.5 L1025.2 741.6 L1019.5 746.7 L1014.3 752.2 L1009.1 757.6 L1001.9 763.4 L994.7 769.2 L986.7 774.0 L980.8 777.7 L974.8 781.4 L971.0 782.8 L967.1 784.2 L963.3 785.6 L959.4 787.0 L955.3 787.5 L951.1 787.9 L946.4 788.8 L941.6 789.6 L936.0 791.8 L930.4 793.9 L923.4 796.9 L918.6 796.4 L916.2 793.6 L912.7 794.7 L913.7 790.8 L913.0 787.0 L918.1 780.3 L917.6 776.6 L917.0 772.8 L915.8 769.3 L914.6 765.8 L913.8 760.7 L911.1 755.6 L906.7 749.7 L905.8 744.9 L904.8 740.1 L905.0 735.6 L905.2 731.0 L905.3 726.3 L905.4 721.9 L905.5 717.5 L905.5 712.9 L905.4 708.3 L904.8 701.9 L901.7 697.4 L899.2 691.3 L896.7 685.1 L895.1 680.2 L893.4 675.3 L891.7 670.3 L890.0 664.6 L888.3 658.8 L886.5 653.0 L887.2 647.1 L887.9 641.1 L890.1 635.6 L892.4 630.0 L894.4 624.1 L896.5 618.0 L898.6 612.0 L904.1 606.1 L909.6 600.2 L912.6 592.1 L915.5 583.9 L914.4 577.0 L913.3 570.1 L912.2 563.0 L910.9 556.0 L909.2 548.3 L907.3 540.6 L904.9 532.2 L902.4 523.7 L901.6 515.2 L897.1 508.0 L889.2 497.0 L883.5 490.9 L877.6 484.7 L871.7 478.5 L867.0 467.3 L862.2 457.3 L868.3 451.0 L869.5 443.5 L871.9 434.8 L874.2 424.8 L874.8 418.5 L875.3 412.3 L874.0 405.4 L872.6 398.6 L862.9 391.0 L855.6 392.2 L847.7 392.8 L839.8 393.4 L833.6 393.9 L827.5 394.5 L819.9 383.3 L814.2 376.4 L808.5 369.5 L801.7 368.9 L794.9 368.2 L788.6 368.8 L782.4 369.4 L774.9 370.6 L767.4 371.8 L758.7 375.5 L749.9 379.3 L743.6 382.4 L737.3 385.5 L726.0 389.3 L714.7 384.3 L708.5 383.1 L702.2 381.9 L696.0 382.5 L689.8 383.2 L682.9 385.1 L676.1 387.0 L669.5 389.1 L662.9 391.3 L656.3 393.4 L645.5 386.0 L638.3 381.7 L631.2 377.5 L625.3 373.9 L619.5 370.3 L611.6 363.1 L605.9 360.1 L600.2 357.2 L596.5 350.6 L592.9 344.1 L590.4 338.2 L588.0 332.3 L583.3 326.6 L578.8 320.9 L574.9 315.2 L569.3 305.0 L563.7 302.4 L558.1 299.8 L558.0 291.9 L560.6 287.3 L559.5 279.6 L552.9 274.5 L558.8 268.7 L565.3 259.6 L568.1 254.1 L571.0 248.6 L572.4 242.7 L573.8 236.8 L573.4 230.2 L573.0 223.6 L572.5 215.6 L568.7 210.0 L569.7 205.0 L572.5 196.2 L580.0 188.0 L585.3 181.1 L590.9 175.2 L596.5 169.3 L600.1 163.7 L603.7 158.2 L613.6 152.2 L618.2 148.5 L622.6 141.5 L629.6 139.3 L636.7 137.1 L643.9 132.2 L651.0 127.3 L654.7 123.2 L658.3 119.1 L658.2 114.9 L658.1 110.8 L664.8 104.5 L672.6 97.6 L681.3 94.4 L689.0 91.3 L692.4 87.4 L695.6 83.7Z M1167.5 563.7 L1166.9 569.5 L1166.2 575.2 L1165.4 579.6 L1164.6 584.1 L1163.7 588.5 L1162.7 592.8 L1158.3 601.8 L1156.4 606.7 L1154.4 611.7 L1152.4 616.6 L1150.2 621.6 L1148.0 626.7 L1145.7 631.7 L1143.4 636.7 L1141.1 641.2 L1138.7 645.8 L1136.4 650.3 L1133.9 654.8 L1131.5 659.3 L1128.9 663.9 L1126.3 668.6 L1123.6 673.1 L1120.9 677.7 L1115.4 684.1 L1112.6 686.3 L1109.8 688.5 L1108.9 687.3 L1108.0 686.2 L1109.9 680.8 L1111.6 675.4 L1113.3 671.1 L1114.9 666.7 L1116.5 662.3 L1119.2 657.7 L1121.8 653.0 L1124.4 648.3 L1126.8 643.6 L1129.1 639.0 L1131.5 634.2 L1132.6 629.9 L1133.6 625.5 L1134.6 621.1 L1137.6 614.8 L1140.5 608.5 L1143.2 606.2 L1145.8 603.9 L1148.3 601.7 L1151.2 597.4 L1153.9 593.1 L1156.5 587.5 L1159.1 582.0 L1161.8 576.4 L1164.5 570.8Z M1029.3 148.5 L1025.9 143.4 L1022.6 138.4 L1025.9 139.7 L1029.1 141.0 L1032.3 142.3 L1033.9 140.9 L1033.6 136.7 L1031.5 132.0 L1030.3 128.6 L1029.1 125.3 L1027.4 120.6 L1023.1 115.2 L1021.5 112.0 L1019.8 108.9 L1016.3 107.7 L1010.6 104.9 L1008.7 107.2 L1004.6 107.0 L999.4 103.7 L994.0 100.5 L988.5 98.0 L989.4 101.2 L984.8 99.3 L980.2 97.4 L974.4 94.9 L967.9 92.4 L963.2 87.2 L956.3 82.7 L960.1 83.6 L954.9 78.6 L948.6 73.0 L951.3 73.0 L954.0 73.0 L956.8 73.5 L959.6 74.1 L962.4 74.6 L959.8 71.1 L963.1 71.9 L966.3 72.7 L969.5 73.5 L972.6 74.3 L974.4 74.1 L976.1 74.0 L977.9 73.9 L979.5 73.9 L982.3 74.8 L985.1 75.7 L987.8 76.6 L992.7 79.5 L997.5 82.5 L1000.3 83.8 L1003.1 85.2 L1005.9 86.6 L1008.6 88.0 L1010.2 88.4 L1011.8 88.7 L1013.3 89.1 L1014.8 89.4 L1016.3 89.8 L1017.7 90.2 L1018.4 90.0 L1019.1 89.7 L1019.7 89.5 L1020.3 89.4 L1020.8 89.2 L1021.3 89.0 L1021.8 88.8 L1022.2 88.8 L1022.7 88.7 L1023.1 88.6 L1023.4 88.6 L1023.7 88.5 L1024.0 88.5 L1024.2 88.5 L1024.4 88.4 L1024.5 88.4 L1024.6 88.4 L1025.8 89.3 L1027.1 90.2 L1027.4 92.2 L1028.6 93.2 L1029.7 94.1 L1030.9 95.0 L1032.0 95.8 L1033.0 96.7 L1034.1 97.6 L1035.1 98.4 L1036.1 99.3 L1037.1 100.1 L1038.1 100.9 L1039.1 101.7 L1040.0 102.5 L1040.9 103.3 L1041.8 104.1 L1042.7 104.8 L1043.5 105.5 L1044.4 106.3 L1046.7 108.3 L1048.9 110.3 L1051.2 112.3 L1053.4 114.3 L1055.6 116.3 L1057.7 118.3 L1059.8 120.4 L1061.9 122.4 L1064.0 124.4 L1066.1 126.4 L1068.1 128.4 L1070.1 130.5 L1072.0 132.5 L1074.0 134.5 L1075.9 136.5 L1077.8 138.5 L1079.7 140.5 L1081.5 142.5 L1083.3 144.5 L1085.1 146.5 L1087.7 149.5 L1090.3 152.5 L1092.9 155.5 L1095.4 158.6 L1098.0 161.7 L1100.5 164.8 L1102.9 167.9 L1105.4 171.0 L1107.8 174.2 L1110.2 177.4 L1112.6 180.6 L1114.9 183.9 L1117.3 187.2 L1119.5 190.5 L1121.8 193.8 L1124.0 197.1 L1126.3 200.5 L1128.4 203.9 L1130.6 207.3 L1132.7 210.7 L1134.8 214.2 L1136.9 217.7 L1138.9 221.2 L1140.9 224.7 L1142.9 228.3 L1144.8 231.8 L1146.8 235.4 L1148.6 239.0 L1150.5 242.6 L1152.3 246.3 L1151.9 245.5 L1151.5 244.7 L1151.1 243.8 L1150.7 243.0 L1150.2 242.1 L1149.8 241.2 L1149.3 240.3 L1149.0 239.8 L1148.8 239.3 L1148.5 238.8 L1148.2 238.2 L1147.9 237.6 L1147.6 237.1 L1147.3 236.4 L1147.0 235.8 L1146.6 235.2 L1145.9 233.9 L1146.4 231.9 L1145.7 230.6 L1144.9 229.3 L1144.1 227.9 L1143.2 226.6 L1142.2 225.3 L1141.2 223.9 L1138.8 219.7 L1136.2 215.5 L1133.7 211.3 L1133.4 211.5 L1133.1 211.7 L1132.7 212.0 L1130.7 209.4 L1128.7 206.8 L1126.6 204.2 L1124.4 201.6 L1122.1 199.1 L1119.8 196.5 L1116.7 192.3 L1113.7 188.0 L1110.0 183.0 L1106.2 178.0 L1104.0 176.2 L1101.8 174.4 L1101.0 175.7 L1103.3 179.4 L1106.8 184.0 L1110.2 188.6 L1114.4 194.1 L1118.5 199.5 L1122.6 205.0 L1124.8 209.0 L1127.1 213.0 L1131.6 219.6 L1130.3 215.9 L1129.0 212.2 L1131.6 217.2 L1134.2 222.3 L1136.2 224.7 L1138.2 227.1 L1139.2 227.3 L1140.1 227.5 L1140.9 227.7 L1139.3 223.0 L1138.3 220.3 L1137.2 217.7 L1140.0 222.7 L1142.8 227.8 L1145.4 232.3 L1148.0 236.9 L1149.5 239.1 L1150.9 241.4 L1153.7 246.6 L1156.3 251.8 L1157.9 255.5 L1159.5 259.2 L1161.0 262.9 L1162.4 266.7 L1164.3 271.9 L1166.1 277.1 L1166.5 279.3 L1166.9 281.6 L1166.7 282.6 L1166.4 283.6 L1166.5 285.5 L1166.5 287.5 L1166.5 289.5 L1166.1 291.1 L1165.6 292.7 L1165.0 294.4 L1164.7 297.0 L1164.3 299.7 L1163.9 302.4 L1162.8 304.4 L1161.6 306.4 L1160.7 308.6 L1159.8 310.8 L1158.8 313.1 L1157.5 314.1 L1156.2 315.2 L1154.8 316.2 L1153.3 317.3 L1151.8 318.3 L1149.1 318.2 L1146.4 318.0 L1145.5 317.8 L1143.3 311.8 L1141.7 306.8 L1140.0 301.8 L1138.3 296.9 L1135.0 288.1 L1132.9 282.2 L1130.7 276.4 L1124.5 267.0 L1119.0 259.6 L1116.2 254.6 L1113.3 249.6 L1110.3 244.7 L1107.0 239.7 L1103.6 234.7 L1100.2 229.7 L1096.8 223.6 L1093.4 217.6 L1088.9 211.3 L1084.4 205.1 L1080.3 200.2 L1076.3 195.4 L1068.9 186.7 L1063.6 180.3 L1058.2 173.9 L1051.9 167.3 L1048.3 162.2 L1046.1 156.3 L1045.5 156.2 L1046.7 159.8 L1047.8 163.4 L1048.9 167.1 L1048.9 169.2 L1042.9 163.5 L1038.1 158.1 L1031.3 150.4Z M674.5 72.8 L678.9 72.2 L683.2 71.5 L687.6 70.9 L691.6 71.9 L695.7 72.9 L698.5 76.5 L701.8 77.6 L707.5 74.9 L713.0 72.9 L719.1 72.7 L725.2 72.6 L732.2 72.5 L737.6 68.2 L745.4 66.9 L749.3 63.7 L753.1 60.6 L748.9 56.2 L751.9 53.5 L754.9 50.9 L757.8 48.4 L762.5 47.3 L767.2 46.3 L771.8 45.2 L776.4 44.3 L775.6 41.0 L774.7 37.8 L779.5 37.9 L784.3 38.1 L789.1 38.3 L792.7 38.0 L796.3 37.7 L799.9 37.5 L803.5 37.2 L807.0 37.0 L810.4 36.4 L813.7 35.8 L817.0 35.2 L821.4 37.4 L825.8 39.8 L830.4 42.2 L835.6 44.5 L841.0 47.0 L846.4 49.5 L851.2 51.4 L856.2 53.4 L861.1 55.3 L866.0 57.2 L870.9 59.1 L875.8 61.0 L878.3 63.9 L880.8 66.8 L881.1 69.5 L881.3 72.2 L886.6 71.2 L889.1 67.8 L882.6 63.4 L883.9 59.6 L889.7 62.1 L895.4 64.7 L895.3 62.2 L890.8 60.1 L886.3 58.0 L881.9 56.0 L877.4 54.0 L873.0 52.1 L869.0 50.8 L864.9 49.5 L860.9 48.2 L856.9 47.0 L853.7 44.2 L850.6 41.5 L846.0 39.8 L841.5 38.1 L839.9 35.8 L838.3 33.5 L842.7 33.4 L847.0 33.3 L853.4 35.5 L857.4 37.9 L861.5 40.4 L866.3 42.3 L871.1 44.3 L875.9 46.4 L880.1 48.1 L884.3 49.8 L888.6 51.6 L896.7 55.5 L899.0 59.0 L901.3 62.6 L909.9 68.4 L915.5 72.3 L921.1 76.3 L925.2 80.5 L929.2 84.7 L936.0 88.7 L938.5 87.4 L941.0 89.5 L938.3 84.2 L943.4 83.5 L936.3 78.1 L928.8 72.2 L927.0 69.4 L925.1 66.8 L928.1 66.7 L931.1 66.6 L935.0 67.2 L938.8 67.9 L942.6 68.6 L946.7 71.3 L948.4 69.1 L951.9 69.7 L955.3 70.2 L958.7 70.8 L949.9 65.4 L945.1 61.6 L945.4 59.8 L945.7 58.1 L945.2 56.3 L944.7 54.6 L944.1 52.9 L941.8 50.7 L939.5 48.5 L937.2 46.5 L934.9 44.5 L932.6 42.5 L930.3 40.6 L928.0 38.8 L925.6 37.0 L923.3 35.3 L920.4 34.2 L917.4 33.1 L914.5 32.1 L911.5 31.1 L908.6 30.0 L905.6 29.0 L902.6 28.0 L899.7 27.1 L896.7 26.1 L893.7 25.2 L890.7 24.2 L887.7 23.3 L884.7 22.4 L881.7 21.6 L878.7 20.7 L875.7 19.9 L872.6 19.0 L869.6 18.2 L866.6 17.4 L863.6 16.6 L860.6 15.9 L857.6 15.1 L854.6 14.4 L851.6 13.6 L848.6 12.9 L845.6 12.3 L842.6 11.6 L839.6 10.9 L836.6 10.3 L833.7 9.7 L830.7 9.1 L827.8 8.5 L824.8 7.9 L821.9 7.4 L819.0 6.8 L816.0 6.3 L813.1 5.8 L810.2 5.3 L807.4 4.8 L804.5 4.4 L802.2 4.4 L799.8 4.5 L797.4 4.6 L794.9 4.7 L792.4 4.9 L789.9 5.0 L787.3 5.2 L784.7 5.4 L782.1 5.6 L779.4 5.8 L776.7 6.0 L774.0 6.3 L771.2 6.5 L768.4 6.8 L765.6 7.1 L762.7 7.4 L759.8 7.8 L756.9 8.1 L753.9 8.5 L750.9 8.9 L747.9 9.3 L744.8 9.7 L741.7 10.2 L738.6 10.6 L735.4 11.1 L732.3 11.6 L729.1 12.1 L725.8 12.7 L722.6 13.3 L719.3 13.8 L719.9 15.3 L720.5 16.9 L721.2 18.5 L724.5 19.7 L728.0 20.9 L731.5 22.2 L735.1 23.6 L738.8 25.0 L742.6 26.4 L741.7 28.4 L740.7 30.5 L739.7 32.6 L738.7 34.8 L737.6 37.1 L733.7 37.0 L729.8 37.0 L725.9 37.0 L722.1 37.0 L718.2 37.0 L714.4 37.0 L710.5 37.0 L706.7 37.1 L702.9 37.2 L699.1 37.2 L695.3 37.3 L691.5 37.5 L686.6 39.3 L681.6 41.2 L681.7 43.4 L681.9 45.7 L682.1 48.1 L682.3 50.5 L679.8 53.4 L677.4 56.4 L674.9 59.5 L672.4 62.6 L673.1 66.0 L673.8 69.4Z M855.3 69.4 L862.0 69.0 L866.5 69.3 L870.9 69.6 L875.3 70.0 L879.7 70.4 L879.9 74.0 L880.0 77.7 L880.0 79.5 L872.9 76.9 L868.1 75.3 L863.3 73.6 L858.6 72.0Z M816.6 51.0 L820.2 50.5 L823.9 50.0 L829.0 53.8 L829.7 57.2 L830.4 60.7 L825.9 61.5 L820.8 60.1 L819.9 57.1 L819.1 54.2Z M947.5 96.4 L952.0 96.7 L956.1 98.1 L960.2 99.4 L964.2 100.8 L968.0 102.2 L967.4 103.2 L963.2 102.7 L958.9 102.1 L954.1 100.3 L949.3 98.5Z M1005.9 112.0 L1008.5 111.2 L1011.0 111.4 L1013.5 111.6 L1015.9 111.9 L1015.9 115.4 L1014.1 115.9 L1012.2 116.4 L1007.8 114.1Z M307.6 357.9 L307.4 359.7 L307.3 361.6 L306.7 365.8 L306.1 370.1 L306.2 371.9 L306.4 373.8 L306.1 378.9 L306.0 384.0 L306.1 391.0 L306.7 391.0 L307.4 391.0 L308.1 391.0 L308.9 391.1 L309.9 391.3 L311.0 391.5 L311.8 394.1 L312.7 396.8 L313.7 399.4 L315.2 404.0 L315.3 410.7 L315.5 417.5 L316.5 423.3 L317.7 429.1 L317.8 437.0 L317.2 442.0 L316.6 446.9 L318.3 447.6 L320.1 448.3 L321.9 449.0 L323.6 454.0 L325.2 454.1 L327.0 454.2 L328.8 455.7 L330.7 457.3 L333.0 461.0 L335.5 464.7 L337.9 473.0 L340.0 472.6 L342.2 472.3 L344.5 474.1 L346.9 476.0 L349.3 477.9 L352.3 478.0 L355.3 478.2 L358.4 478.4 L361.2 481.4 L364.1 484.4 L367.1 487.4 L371.2 493.6 L375.5 499.8 L379.5 501.1 L383.5 502.5 L387.7 503.8 L389.0 511.5 L391.0 518.7 L393.1 525.9 L393.4 531.3 L393.7 536.6 L392.8 542.2 L391.9 547.7 L391.0 553.2 L388.0 559.0 L385.2 564.7 L383.8 571.0 L382.6 577.3 L380.9 584.8 L381.4 590.6 L381.9 596.4 L382.5 602.2 L383.9 607.4 L385.4 612.6 L386.8 617.8 L388.2 623.9 L389.6 629.9 L390.2 635.7 L391.0 641.4 L391.6 647.0 L392.2 652.5 L393.0 657.2 L393.9 661.9 L394.8 666.6 L394.3 670.2 L393.9 673.7 L391.2 672.7 L388.6 671.8 L386.3 671.9 L384.0 672.0 L382.7 673.1 L381.5 674.1 L380.4 675.1 L379.9 677.0 L379.6 678.8 L379.3 680.7 L379.1 683.5 L381.1 687.3 L383.1 691.1 L385.7 695.5 L388.3 699.8 L391.4 706.0 L392.9 711.0 L395.3 715.8 L396.6 718.8 L397.9 721.7 L399.6 725.5 L401.3 728.3 L403.0 731.0 L404.7 733.7 L405.9 735.5 L407.1 737.4 L408.3 739.1 L406.8 737.6 L405.4 736.0 L404.0 734.4 L402.7 732.9 L402.5 730.5 L401.2 729.0 L404.5 733.0 L407.8 736.9 L413.0 742.8 L415.6 745.7 L418.2 748.6 L420.8 751.5 L421.1 751.7 L421.3 752.0 L421.6 752.3 L421.9 752.6 L421.3 752.0 L420.7 751.4 L420.2 750.8 L419.7 750.2 L419.2 749.7 L422.3 753.0 L425.4 756.3 L428.6 759.6 L428.0 759.0 L427.5 758.4 L426.9 757.9 L426.4 757.4 L425.9 756.9 L429.2 760.2 L432.5 763.6 L435.9 766.9 L438.2 769.1 L440.6 771.4 L443.0 773.6 L445.4 775.8 L447.8 778.0 L449.3 779.4 L450.8 780.8 L452.3 782.1 L453.9 783.5 L457.6 786.7 L461.2 789.8 L465.0 792.9 L467.3 794.7 L469.6 796.6 L471.9 798.4 L474.3 800.3 L476.7 802.1 L479.1 803.9 L483.8 807.4 L488.5 810.8 L491.9 813.2 L495.3 815.6 L498.8 818.0 L502.3 820.3 L505.8 822.6 L509.3 824.9 L508.2 824.1 L507.0 823.4 L505.9 822.7 L504.8 822.0 L503.7 821.3 L502.6 820.5 L501.6 819.8 L500.5 819.1 L499.5 818.4 L498.5 817.8 L497.5 817.1 L496.5 816.4 L495.5 815.7 L494.5 815.1 L491.7 813.1 L488.8 811.1 L486.0 809.1 L483.2 807.0 L480.4 805.0 L477.7 802.9 L475.0 800.8 L472.3 798.7 L469.6 796.6 L467.0 794.5 L464.4 792.4 L461.8 790.2 L459.2 788.1 L456.7 785.9 L454.2 783.7 L451.7 781.5 L448.7 778.9 L445.7 776.2 L442.8 773.5 L439.9 770.7 L437.0 767.9 L434.1 765.1 L431.3 762.3 L428.4 759.4 L425.7 756.6 L422.9 753.7 L420.2 750.7 L417.4 747.8 L414.8 744.8 L412.1 741.8 L409.5 738.8 L406.9 735.8 L404.3 732.7 L401.7 729.6 L399.2 726.5 L396.7 723.4 L394.3 720.2 L391.8 717.1 L389.4 713.9 L387.1 710.6 L384.7 707.4 L382.4 704.2 L380.1 700.9 L377.9 697.6 L375.6 694.3 L373.4 691.0 L371.3 687.6 L369.1 684.3 L367.0 680.9 L365.0 677.5 L362.9 674.1 L360.9 670.7 L359.0 667.2 L357.0 663.8 L355.1 660.4 L353.3 656.9 L351.4 653.5 L349.6 650.0 L347.9 646.5 L346.1 642.9 L344.4 639.4 L342.7 635.9 L341.1 632.3 L339.4 628.7 L337.9 625.1 L336.3 621.5 L334.8 617.9 L333.3 614.2 L331.8 610.6 L330.4 606.9 L329.0 603.3 L327.6 599.6 L326.3 595.9 L325.0 592.2 L323.7 588.4 L322.5 584.7 L321.3 581.0 L320.1 577.2 L318.9 573.5 L317.8 569.7 L316.8 565.9 L315.7 562.1 L314.7 558.3 L313.7 554.5 L312.8 550.7 L311.9 546.8 L311.0 543.0 L310.2 539.2 L309.4 535.3 L308.6 531.4 L307.9 527.6 L307.2 523.7 L306.5 519.8 L305.9 516.0 L305.3 512.1 L304.7 508.2 L304.2 504.3 L303.7 500.4 L303.2 496.5 L302.8 492.5 L302.4 488.6 L302.0 484.7 L301.7 480.8 L301.4 476.9 L301.1 472.9 L300.9 469.0 L300.7 465.1 L300.5 461.1 L300.4 457.2 L300.3 453.3 L300.3 449.3 L300.3 445.4 L300.3 441.5 L300.3 437.5 L300.4 433.6 L300.5 429.7 L300.7 425.7 L300.9 421.7 L301.1 417.8 L301.4 413.8 L301.6 409.8 L302.0 405.8 L302.4 401.8 L302.8 397.7 L303.2 393.7 L303.7 389.6 L304.2 385.6 L304.8 381.5 L305.4 377.4 L306.0 373.3 L306.7 369.1 L307.5 365.0 L307.5 364.8 L307.5 364.6 L307.6 364.5 L307.6 364.3 L307.6 364.1 L307.7 363.9 L307.7 363.7 L307.8 363.4 L307.8 363.2 L307.8 363.0 L307.9 362.7 L307.9 362.5 L308.0 362.2 L308.0 362.0 L308.1 361.7 L308.1 361.4 L308.2 361.1 L308.2 360.8 L308.3 360.5 L308.4 360.2 L308.4 359.9 L308.5 359.5 L307.2 358.9 L307.3 358.6 L307.5 358.2Z" fill="none" stroke="#14469a" stroke-width="11" stroke-linejoin="round" opacity="0.8" filter="url(#b6)"/>
<ellipse cx="330" cy="440" rx="70" ry="400" fill="#000" opacity="0.45" filter="url(#b25)"/>
<ellipse cx="560" cy="860" rx="330" ry="75" fill="#000" opacity="0.55" filter="url(#b25)"/>
<circle cx="749.5" cy="445.2" r="450.6" fill="url(#lg)"/>
<circle cx="749.5" cy="445.2" r="441.6" fill="none" stroke="#1a3a70" stroke-width="14" opacity="0.4" filter="url(#b6)"/>
<g clip-path="url(#lc)">
<rect x="250" y="0" width="1000" height="900" fill="#64502f"/>
<ellipse cx="805" cy="163" rx="330" ry="100" fill="#a0744f" opacity="1" filter="url(#b25)"/>
<ellipse cx="964" cy="158" rx="110" ry="55" fill="#ac845c" opacity="0.9" filter="url(#b25)"/>
<ellipse cx="653" cy="193" rx="70" ry="45" fill="#a37c55" opacity="0.8" filter="url(#b25)"/>
<ellipse cx="1124" cy="234" rx="60" ry="130" fill="#a08059" opacity="0.95" filter="url(#b14)"/>
<ellipse cx="733" cy="96" rx="140" ry="13" fill="#5c4a30" opacity="0.75" filter="url(#b6)"/>
<ellipse cx="689" cy="107" rx="30" ry="14" fill="#513f2a" opacity="0.85" filter="url(#b6)"/>
<ellipse cx="940" cy="214" rx="34" ry="22" fill="#6d5138" opacity="0.75" filter="url(#b14)"/>
<ellipse cx="817" cy="177" rx="45" ry="26" fill="#705339" opacity="0.75" filter="url(#b14)"/>
<ellipse cx="855" cy="234" rx="28" ry="20" fill="#725539" opacity="0.6" filter="url(#b14)"/>
<ellipse cx="920" cy="149" rx="22" ry="12" fill="#5e4a36" opacity="0.8" filter="url(#b6)"/>
<ellipse cx="988" cy="412" rx="300" ry="140" fill="#39421f" opacity="1" filter="url(#b25)"/>
<ellipse cx="690" cy="349" rx="200" ry="60" fill="#4a4a25" opacity="0.9" filter="url(#b25)"/>
<ellipse cx="1121" cy="356" rx="55" ry="80" fill="#3f4020" opacity="1" filter="url(#b14)"/>
<ellipse cx="1085" cy="295" rx="40" ry="40" fill="#6b5535" opacity="0.8" filter="url(#b14)"/>
<ellipse cx="1172" cy="382" rx="24" ry="95" fill="#86663f" opacity="0.95" filter="url(#b14)"/>
<ellipse cx="1146" cy="426" rx="22" ry="36" fill="#6f5637" opacity="0.75" filter="url(#b14)"/>
<ellipse cx="1112" cy="503" rx="55" ry="80" fill="#484226" opacity="1" filter="url(#b25)"/>
<ellipse cx="1105" cy="616" rx="55" ry="80" fill="#3c3c20" opacity="1" filter="url(#b25)"/>
<ellipse cx="969" cy="693" rx="150" ry="85" fill="#80603f" opacity="1" filter="url(#b25)"/>
<ellipse cx="913" cy="708" rx="18" ry="95" fill="#96744f" opacity="0.9" filter="url(#b14)"/>
<ellipse cx="951" cy="768" rx="110" ry="45" fill="#74563a" opacity="0.95" filter="url(#b25)"/>
<ellipse cx="1028" cy="725" rx="34" ry="75" fill="#383a20" opacity="0.95" filter="url(#b14)"/>
<ellipse cx="1139" cy="631" rx="25" ry="80" fill="#6a5334" opacity="1" filter="url(#b14)"/>
<ellipse cx="1151" cy="618" rx="5" ry="60" fill="#3e4222" opacity="0.7" filter="url(#b6)"/>
<ellipse cx="340" cy="566" rx="120" ry="230" fill="#38381b" opacity="1" filter="url(#b25)"/>
<ellipse cx="369" cy="533" rx="24" ry="50" fill="#51442a" opacity="0.85" filter="url(#b14)"/>
<ellipse cx="994" cy="92" rx="180" ry="26" fill="#5d4f33" opacity="0.95" filter="url(#b14)"/>
<ellipse cx="815" cy="50" rx="220" ry="30" fill="#4e4a2e" opacity="0.95" filter="url(#b14)"/>
<ellipse cx="1046" cy="136" rx="50" ry="40" fill="#9a7b56" opacity="0.9" filter="url(#b14)"/>
<rect x="290" y="60" width="920" height="770" filter="url(#nz)" opacity="0.4"/>
<path d="M1093.4 452.3 L1098.5 446.6 L1106.8 446.6 L1108.1 456.6 L1104.3 471.1 L1099.3 475.8 L1093.8 469.2 L1093.3 459.1Z M1072.6 486.8 L1075.0 499.2 L1072.9 516.2 L1079.0 532.4 L1081.1 545.4 L1077.7 543.5 L1071.9 527.4 L1070.7 505.1Z M1100.1 553.0 L1101.6 567.4 L1100.5 582.8 L1098.5 599.9 L1095.2 598.5 L1096.6 583.3 L1098.3 567.8Z" fill="#0b1016"/>
<circle cx="749.5" cy="445.2" r="450.6" fill="url(#lg2)"/>
</g>
<path d="M586.3 141.5 L591.3 139.3 L592.4 141.6 L588.3 143.7Z M595.8 142.1 L599.5 141.8 L598.8 144.3 L596.1 144.5Z M610.8 136.7 L614.7 135.6 L613.7 139.7 L609.7 140.8Z M616.7 131.4 L619.5 131.2 L618.9 133.6 L616.1 133.9Z M577.8 138.4 L579.5 138.2 L578.8 140.7 L577.0 140.9Z M493.8 273.5 L495.6 273.4 L495.0 276.6 L493.2 276.8Z M484.6 254.9 L486.4 254.7 L485.9 256.8 L484.2 256.9Z M487.1 276.3 L487.6 278.3 L485.8 278.5Z M502.6 262.3 L504.9 262.1 L504.5 264.2 L502.2 264.4Z M491.6 258.2 L494.0 259.0 L491.1 260.3Z M834.1 443.5 L837.1 444.8 L835.3 447.9 L833.4 446.1Z M844.5 427.2 L845.7 428.5 L844.5 429.7Z M858.2 402.2 L863.1 403.5 L860.8 408.5 L857.7 406.0Z M1147.0 563.8 L1147.8 565.4 L1146.3 568.6Z M1150.0 569.6 L1150.4 571.3 L1149.2 571.6Z M1151.9 574.6 L1152.0 576.3 L1151.1 577.0Z M972.9 96.7 L975.5 97.3 L976.9 100.3 L973.9 99.1Z M961.8 87.4 L962.0 87.0 L959.4 86.4 L959.8 87.0Z M952.9 82.4 L953.6 81.1 L953.9 83.2Z M949.8 77.4 L953.2 77.7 L953.2 79.1 L949.6 77.9Z M954.4 88.9 L955.8 89.2 L955.9 90.3Z M942.8 80.8 L934.1 75.6 L932.3 74.8 L940.0 79.3 L945.6 82.4Z M952.8 89.1 L953.8 88.8 L953.9 89.9Z M949.9 86.4 L950.2 85.9 L949.1 85.2Z M966.4 92.5 L968.1 93.4 L966.5 93.6Z M970.5 101.6 L972.4 100.9 L972.5 102.0Z M941.4 91.3 L941.7 90.8 L940.3 90.5Z M916.8 76.7 L918.3 75.9 L916.2 74.5 L915.7 76.0Z M905.7 66.7 L906.8 66.4 L909.6 68.8 L907.1 67.9Z M875.6 83.8 L878.0 84.1 L877.4 84.6Z M850.1 94.4 L852.0 95.2 L850.4 95.8Z M949.9 90.1 L950.2 89.7 L948.9 89.4Z M956.5 93.1 L957.9 93.4 L957.6 93.9Z M962.4 93.3 L963.7 93.5 L963.4 94.0Z M941.5 71.9 L943.2 72.7 L941.7 72.9Z M934.9 67.4 L936.5 68.2 L935.3 67.9Z" fill="#64502f"/>
<path d="M699.0 79.0 L704.4 78.2 L711.9 82.4 L718.2 82.0 L724.5 81.5 L732.6 82.7 L737.1 81.3 L741.7 80.0 L746.2 78.7 L751.8 77.0 L757.5 75.3 L763.0 73.7 L767.9 73.1 L772.9 72.6 L777.8 72.1 L782.4 72.2 L786.9 72.3 L791.5 72.5 L796.1 72.6 L801.2 72.6 L806.3 72.7 L811.5 72.7 L819.0 72.5 L823.2 72.3 L827.3 72.1 L831.3 72.0 L835.4 71.8 L840.3 74.5 L845.9 74.4 L842.9 77.8 L844.8 81.6 L850.2 85.8 L848.6 88.9 L843.9 93.9 L848.7 95.6 L853.5 97.4 L859.5 100.2 L865.5 103.2 L873.2 103.2 L879.1 104.9 L885.0 106.6 L890.8 108.4 L897.4 115.5 L902.1 117.1 L906.8 118.7 L913.4 121.3 L920.1 123.9 L924.9 125.9 L929.6 128.0 L933.1 126.6 L936.5 125.3 L933.2 119.1 L932.5 115.6 L935.4 113.6 L938.2 111.7 L942.3 112.3 L946.4 113.0 L950.5 113.6 L957.1 118.7 L963.8 121.2 L968.9 123.5 L974.0 125.8 L977.8 126.8 L981.6 127.9 L985.3 128.9 L989.0 130.0 L993.6 132.1 L998.1 134.1 L1002.6 136.2 L1005.3 135.8 L1008.0 135.5 L1010.6 135.1 L1013.1 134.8 L1018.7 136.2 L1022.6 138.4 L1025.9 143.4 L1029.3 148.5 L1031.9 152.5 L1035.6 157.5 L1039.3 162.6 L1043.9 167.6 L1048.5 172.7 L1052.4 178.0 L1056.2 183.4 L1060.0 188.0 L1063.6 192.7 L1067.3 197.5 L1070.9 202.3 L1073.0 206.7 L1075.1 211.2 L1079.5 215.5 L1083.7 219.8 L1087.0 225.5 L1090.1 231.2 L1093.0 237.8 L1095.9 244.4 L1099.8 253.1 L1103.7 257.1 L1107.4 261.0 L1111.1 268.1 L1114.7 275.2 L1117.4 280.3 L1120.0 285.4 L1123.5 289.4 L1126.9 293.4 L1130.8 298.8 L1134.7 304.3 L1138.3 309.3 L1141.8 314.2 L1145.3 320.6 L1146.6 328.4 L1149.6 334.2 L1152.6 340.1 L1154.7 340.9 L1156.7 341.8 L1158.4 340.9 L1160.0 340.0 L1161.5 339.1 L1163.0 338.2 L1164.4 337.3 L1165.7 336.4 L1167.5 336.5 L1169.2 336.5 L1170.5 334.7 L1171.7 332.9 L1173.8 333.6 L1175.1 341.0 L1176.8 346.8 L1176.9 351.3 L1177.1 355.8 L1176.9 362.1 L1176.6 368.6 L1176.7 373.3 L1176.8 378.0 L1176.9 382.8 L1176.5 388.5 L1176.1 394.3 L1174.8 401.0 L1173.4 407.9 L1172.0 412.5 L1170.5 417.2 L1168.9 421.9 L1167.2 426.7 L1165.4 431.4 L1163.5 436.2 L1161.5 441.0 L1158.8 446.2 L1155.9 451.5 L1153.7 457.8 L1151.5 464.2 L1147.8 471.7 L1144.0 479.3 L1142.4 484.6 L1140.7 490.0 L1138.3 497.6 L1135.8 505.2 L1135.9 512.5 L1135.8 519.8 L1135.6 526.0 L1135.3 532.2 L1134.5 537.4 L1133.7 542.6 L1134.5 549.0 L1135.1 555.4 L1134.9 561.3 L1134.7 567.2 L1133.5 572.2 L1132.3 577.3 L1131.0 582.3 L1130.1 587.1 L1129.2 592.0 L1128.3 596.8 L1126.2 604.6 L1119.8 614.2 L1115.6 619.7 L1111.2 625.1 L1107.3 628.4 L1103.2 631.7 L1099.0 635.1 L1091.6 644.6 L1086.4 649.7 L1081.0 654.8 L1077.2 662.5 L1076.7 668.5 L1076.1 674.4 L1074.3 680.0 L1072.4 685.5 L1070.5 690.9 L1064.9 697.6 L1059.8 700.9 L1054.6 704.1 L1049.8 708.6 L1045.0 713.2 L1044.0 717.1 L1043.0 720.9 L1040.0 725.2 L1037.0 729.5 L1033.9 733.7 L1030.9 736.5 L1025.2 741.6 L1019.5 746.7 L1014.3 752.2 L1009.1 757.6 L1001.9 763.4 L994.7 769.2 L986.7 774.0 L980.8 777.7 L974.8 781.4 L971.0 782.8 L967.1 784.2 L963.3 785.6 L959.4 787.0 L955.3 787.5 L951.1 787.9 L946.4 788.8 L941.6 789.6 L936.0 791.8 L930.4 793.9 L923.4 796.9 L918.6 796.4 L916.2 793.6 L912.7 794.7 L913.7 790.8 L913.0 787.0 L918.1 780.3 L917.6 776.6 L917.0 772.8 L915.8 769.3 L914.6 765.8 L913.8 760.7 L911.1 755.6 L906.7 749.7 L905.8 744.9 L904.8 740.1 L905.0 735.6 L905.2 731.0 L905.3 726.3 L905.4 721.9 L905.5 717.5 L905.5 712.9 L905.4 708.3 L904.8 701.9 L901.7 697.4 L899.2 691.3 L896.7 685.1 L895.1 680.2 L893.4 675.3 L891.7 670.3 L890.0 664.6 L888.3 658.8 L886.5 653.0 L887.2 647.1 L887.9 641.1 L890.1 635.6 L892.4 630.0 L894.4 624.1 L896.5 618.0 L898.6 612.0 L904.1 606.1 L909.6 600.2 L912.6 592.1 L915.5 583.9 L914.4 577.0 L913.3 570.1 L912.2 563.0 L910.9 556.0 L909.2 548.3 L907.3 540.6 L904.9 532.2 L902.4 523.7 L901.6 515.2 L897.1 508.0 L889.2 497.0 L883.5 490.9 L877.6 484.7 L871.7 478.5 L867.0 467.3 L862.2 457.3 L868.3 451.0 L869.5 443.5 L871.9 434.8 L874.2 424.8 L874.8 418.5 L875.3 412.3 L874.0 405.4 L872.6 398.6 L862.9 391.0 L855.6 392.2 L847.7 392.8 L839.8 393.4 L833.6 393.9 L827.5 394.5 L819.9 383.3 L814.2 376.4 L808.5 369.5 L801.7 368.9 L794.9 368.2 L788.6 368.8 L782.4 369.4 L774.9 370.6 L767.4 371.8 L758.7 375.5 L749.9 379.3 L743.6 382.4 L737.3 385.5 L726.0 389.3 L714.7 384.3 L708.5 383.1 L702.2 381.9 L696.0 382.5 L689.8 383.2 L682.9 385.1 L676.1 387.0 L669.5 389.1 L662.9 391.3 L656.3 393.4 L645.5 386.0 L638.3 381.7 L631.2 377.5 L625.3 373.9 L619.5 370.3 L611.6 363.1 L605.9 360.1 L600.2 357.2 L596.5 350.6 L592.9 344.1 L590.4 338.2 L588.0 332.3 L583.3 326.6 L578.8 320.9 L574.9 315.2 L569.3 305.0 L563.7 302.4 L558.1 299.8 L558.0 291.9 L560.6 287.3 L559.5 279.6 L552.9 274.5 L558.8 268.7 L565.3 259.6 L568.1 254.1 L571.0 248.6 L572.4 242.7 L573.8 236.8 L573.4 230.2 L573.0 223.6 L572.5 215.6 L568.7 210.0 L569.7 205.0 L572.5 196.2 L580.0 188.0 L585.3 181.1 L590.9 175.2 L596.5 169.3 L600.1 163.7 L603.7 158.2 L613.6 152.2 L618.2 148.5 L622.6 141.5 L629.6 139.3 L636.7 137.1 L643.9 132.2 L651.0 127.3 L654.7 123.2 L658.3 119.1 L658.2 114.9 L658.1 110.8 L664.8 104.5 L672.6 97.6 L681.3 94.4 L689.0 91.3 L692.4 87.4 L695.6 83.7Z M1167.5 563.7 L1166.9 569.5 L1166.2 575.2 L1165.4 579.6 L1164.6 584.1 L1163.7 588.5 L1162.7 592.8 L1158.3 601.8 L1156.4 606.7 L1154.4 611.7 L1152.4 616.6 L1150.2 621.6 L1148.0 626.7 L1145.7 631.7 L1143.4 636.7 L1141.1 641.2 L1138.7 645.8 L1136.4 650.3 L1133.9 654.8 L1131.5 659.3 L1128.9 663.9 L1126.3 668.6 L1123.6 673.1 L1120.9 677.7 L1115.4 684.1 L1112.6 686.3 L1109.8 688.5 L1108.9 687.3 L1108.0 686.2 L1109.9 680.8 L1111.6 675.4 L1113.3 671.1 L1114.9 666.7 L1116.5 662.3 L1119.2 657.7 L1121.8 653.0 L1124.4 648.3 L1126.8 643.6 L1129.1 639.0 L1131.5 634.2 L1132.6 629.9 L1133.6 625.5 L1134.6 621.1 L1137.6 614.8 L1140.5 608.5 L1143.2 606.2 L1145.8 603.9 L1148.3 601.7 L1151.2 597.4 L1153.9 593.1 L1156.5 587.5 L1159.1 582.0 L1161.8 576.4 L1164.5 570.8Z M1029.3 148.5 L1025.9 143.4 L1022.6 138.4 L1025.9 139.7 L1029.1 141.0 L1032.3 142.3 L1033.9 140.9 L1033.6 136.7 L1031.5 132.0 L1030.3 128.6 L1029.1 125.3 L1027.4 120.6 L1023.1 115.2 L1021.5 112.0 L1019.8 108.9 L1016.3 107.7 L1010.6 104.9 L1008.7 107.2 L1004.6 107.0 L999.4 103.7 L994.0 100.5 L988.5 98.0 L989.4 101.2 L984.8 99.3 L980.2 97.4 L974.4 94.9 L967.9 92.4 L963.2 87.2 L956.3 82.7 L960.1 83.6 L954.9 78.6 L948.6 73.0 L951.3 73.0 L954.0 73.0 L956.8 73.5 L959.6 74.1 L962.4 74.6 L959.8 71.1 L963.1 71.9 L966.3 72.7 L969.5 73.5 L972.6 74.3 L974.4 74.1 L976.1 74.0 L977.9 73.9 L979.5 73.9 L982.3 74.8 L985.1 75.7 L987.8 76.6 L992.7 79.5 L997.5 82.5 L1000.3 83.8 L1003.1 85.2 L1005.9 86.6 L1008.6 88.0 L1010.2 88.4 L1011.8 88.7 L1013.3 89.1 L1014.8 89.4 L1016.3 89.8 L1017.7 90.2 L1018.4 90.0 L1019.1 89.7 L1019.7 89.5 L1020.3 89.4 L1020.8 89.2 L1021.3 89.0 L1021.8 88.8 L1022.2 88.8 L1022.7 88.7 L1023.1 88.6 L1023.4 88.6 L1023.7 88.5 L1024.0 88.5 L1024.2 88.5 L1024.4 88.4 L1024.5 88.4 L1024.6 88.4 L1025.8 89.3 L1027.1 90.2 L1027.4 92.2 L1028.6 93.2 L1029.7 94.1 L1030.9 95.0 L1032.0 95.8 L1033.0 96.7 L1034.1 97.6 L1035.1 98.4 L1036.1 99.3 L1037.1 100.1 L1038.1 100.9 L1039.1 101.7 L1040.0 102.5 L1040.9 103.3 L1041.8 104.1 L1042.7 104.8 L1043.5 105.5 L1044.4 106.3 L1046.7 108.3 L1048.9 110.3 L1051.2 112.3 L1053.4 114.3 L1055.6 116.3 L1057.7 118.3 L1059.8 120.4 L1061.9 122.4 L1064.0 124.4 L1066.1 126.4 L1068.1 128.4 L1070.1 130.5 L1072.0 132.5 L1074.0 134.5 L1075.9 136.5 L1077.8 138.5 L1079.7 140.5 L1081.5 142.5 L1083.3 144.5 L1085.1 146.5 L1087.7 149.5 L1090.3 152.5 L1092.9 155.5 L1095.4 158.6 L1098.0 161.7 L1100.5 164.8 L1102.9 167.9 L1105.4 171.0 L1107.8 174.2 L1110.2 177.4 L1112.6 180.6 L1114.9 183.9 L1117.3 187.2 L1119.5 190.5 L1121.8 193.8 L1124.0 197.1 L1126.3 200.5 L1128.4 203.9 L1130.6 207.3 L1132.7 210.7 L1134.8 214.2 L1136.9 217.7 L1138.9 221.2 L1140.9 224.7 L1142.9 228.3 L1144.8 231.8 L1146.8 235.4 L1148.6 239.0 L1150.5 242.6 L1152.3 246.3 L1151.9 245.5 L1151.5 244.7 L1151.1 243.8 L1150.7 243.0 L1150.2 242.1 L1149.8 241.2 L1149.3 240.3 L1149.0 239.8 L1148.8 239.3 L1148.5 238.8 L1148.2 238.2 L1147.9 237.6 L1147.6 237.1 L1147.3 236.4 L1147.0 235.8 L1146.6 235.2 L1145.9 233.9 L1146.4 231.9 L1145.7 230.6 L1144.9 229.3 L1144.1 227.9 L1143.2 226.6 L1142.2 225.3 L1141.2 223.9 L1138.8 219.7 L1136.2 215.5 L1133.7 211.3 L1133.4 211.5 L1133.1 211.7 L1132.7 212.0 L1130.7 209.4 L1128.7 206.8 L1126.6 204.2 L1124.4 201.6 L1122.1 199.1 L1119.8 196.5 L1116.7 192.3 L1113.7 188.0 L1110.0 183.0 L1106.2 178.0 L1104.0 176.2 L1101.8 174.4 L1101.0 175.7 L1103.3 179.4 L1106.8 184.0 L1110.2 188.6 L1114.4 194.1 L1118.5 199.5 L1122.6 205.0 L1124.8 209.0 L1127.1 213.0 L1131.6 219.6 L1130.3 215.9 L1129.0 212.2 L1131.6 217.2 L1134.2 222.3 L1136.2 224.7 L1138.2 227.1 L1139.2 227.3 L1140.1 227.5 L1140.9 227.7 L1139.3 223.0 L1138.3 220.3 L1137.2 217.7 L1140.0 222.7 L1142.8 227.8 L1145.4 232.3 L1148.0 236.9 L1149.5 239.1 L1150.9 241.4 L1153.7 246.6 L1156.3 251.8 L1157.9 255.5 L1159.5 259.2 L1161.0 262.9 L1162.4 266.7 L1164.3 271.9 L1166.1 277.1 L1166.5 279.3 L1166.9 281.6 L1166.7 282.6 L1166.4 283.6 L1166.5 285.5 L1166.5 287.5 L1166.5 289.5 L1166.1 291.1 L1165.6 292.7 L1165.0 294.4 L1164.7 297.0 L1164.3 299.7 L1163.9 302.4 L1162.8 304.4 L1161.6 306.4 L1160.7 308.6 L1159.8 310.8 L1158.8 313.1 L1157.5 314.1 L1156.2 315.2 L1154.8 316.2 L1153.3 317.3 L1151.8 318.3 L1149.1 318.2 L1146.4 318.0 L1145.5 317.8 L1143.3 311.8 L1141.7 306.8 L1140.0 301.8 L1138.3 296.9 L1135.0 288.1 L1132.9 282.2 L1130.7 276.4 L1124.5 267.0 L1119.0 259.6 L1116.2 254.6 L1113.3 249.6 L1110.3 244.7 L1107.0 239.7 L1103.6 234.7 L1100.2 229.7 L1096.8 223.6 L1093.4 217.6 L1088.9 211.3 L1084.4 205.1 L1080.3 200.2 L1076.3 195.4 L1068.9 186.7 L1063.6 180.3 L1058.2 173.9 L1051.9 167.3 L1048.3 162.2 L1046.1 156.3 L1045.5 156.2 L1046.7 159.8 L1047.8 163.4 L1048.9 167.1 L1048.9 169.2 L1042.9 163.5 L1038.1 158.1 L1031.3 150.4Z M674.5 72.8 L678.9 72.2 L683.2 71.5 L687.6 70.9 L691.6 71.9 L695.7 72.9 L698.5 76.5 L701.8 77.6 L707.5 74.9 L713.0 72.9 L719.1 72.7 L725.2 72.6 L732.2 72.5 L737.6 68.2 L745.4 66.9 L749.3 63.7 L753.1 60.6 L748.9 56.2 L751.9 53.5 L754.9 50.9 L757.8 48.4 L762.5 47.3 L767.2 46.3 L771.8 45.2 L776.4 44.3 L775.6 41.0 L774.7 37.8 L779.5 37.9 L784.3 38.1 L789.1 38.3 L792.7 38.0 L796.3 37.7 L799.9 37.5 L803.5 37.2 L807.0 37.0 L810.4 36.4 L813.7 35.8 L817.0 35.2 L821.4 37.4 L825.8 39.8 L830.4 42.2 L835.6 44.5 L841.0 47.0 L846.4 49.5 L851.2 51.4 L856.2 53.4 L861.1 55.3 L866.0 57.2 L870.9 59.1 L875.8 61.0 L878.3 63.9 L880.8 66.8 L881.1 69.5 L881.3 72.2 L886.6 71.2 L889.1 67.8 L882.6 63.4 L883.9 59.6 L889.7 62.1 L895.4 64.7 L895.3 62.2 L890.8 60.1 L886.3 58.0 L881.9 56.0 L877.4 54.0 L873.0 52.1 L869.0 50.8 L864.9 49.5 L860.9 48.2 L856.9 47.0 L853.7 44.2 L850.6 41.5 L846.0 39.8 L841.5 38.1 L839.9 35.8 L838.3 33.5 L842.7 33.4 L847.0 33.3 L853.4 35.5 L857.4 37.9 L861.5 40.4 L866.3 42.3 L871.1 44.3 L875.9 46.4 L880.1 48.1 L884.3 49.8 L888.6 51.6 L896.7 55.5 L899.0 59.0 L901.3 62.6 L909.9 68.4 L915.5 72.3 L921.1 76.3 L925.2 80.5 L929.2 84.7 L936.0 88.7 L938.5 87.4 L941.0 89.5 L938.3 84.2 L943.4 83.5 L936.3 78.1 L928.8 72.2 L927.0 69.4 L925.1 66.8 L928.1 66.7 L931.1 66.6 L935.0 67.2 L938.8 67.9 L942.6 68.6 L946.7 71.3 L948.4 69.1 L951.9 69.7 L955.3 70.2 L958.7 70.8 L949.9 65.4 L945.1 61.6 L945.4 59.8 L945.7 58.1 L945.2 56.3 L944.7 54.6 L944.1 52.9 L941.8 50.7 L939.5 48.5 L937.2 46.5 L934.9 44.5 L932.6 42.5 L930.3 40.6 L928.0 38.8 L925.6 37.0 L923.3 35.3 L920.4 34.2 L917.4 33.1 L914.5 32.1 L911.5 31.1 L908.6 30.0 L905.6 29.0 L902.6 28.0 L899.7 27.1 L896.7 26.1 L893.7 25.2 L890.7 24.2 L887.7 23.3 L884.7 22.4 L881.7 21.6 L878.7 20.7 L875.7 19.9 L872.6 19.0 L869.6 18.2 L866.6 17.4 L863.6 16.6 L860.6 15.9 L857.6 15.1 L854.6 14.4 L851.6 13.6 L848.6 12.9 L845.6 12.3 L842.6 11.6 L839.6 10.9 L836.6 10.3 L833.7 9.7 L830.7 9.1 L827.8 8.5 L824.8 7.9 L821.9 7.4 L819.0 6.8 L816.0 6.3 L813.1 5.8 L810.2 5.3 L807.4 4.8 L804.5 4.4 L802.2 4.4 L799.8 4.5 L797.4 4.6 L794.9 4.7 L792.4 4.9 L789.9 5.0 L787.3 5.2 L784.7 5.4 L782.1 5.6 L779.4 5.8 L776.7 6.0 L774.0 6.3 L771.2 6.5 L768.4 6.8 L765.6 7.1 L762.7 7.4 L759.8 7.8 L756.9 8.1 L753.9 8.5 L750.9 8.9 L747.9 9.3 L744.8 9.7 L741.7 10.2 L738.6 10.6 L735.4 11.1 L732.3 11.6 L729.1 12.1 L725.8 12.7 L722.6 13.3 L719.3 13.8 L719.9 15.3 L720.5 16.9 L721.2 18.5 L724.5 19.7 L728.0 20.9 L731.5 22.2 L735.1 23.6 L738.8 25.0 L742.6 26.4 L741.7 28.4 L740.7 30.5 L739.7 32.6 L738.7 34.8 L737.6 37.1 L733.7 37.0 L729.8 37.0 L725.9 37.0 L722.1 37.0 L718.2 37.0 L714.4 37.0 L710.5 37.0 L706.7 37.1 L702.9 37.2 L699.1 37.2 L695.3 37.3 L691.5 37.5 L686.6 39.3 L681.6 41.2 L681.7 43.4 L681.9 45.7 L682.1 48.1 L682.3 50.5 L679.8 53.4 L677.4 56.4 L674.9 59.5 L672.4 62.6 L673.1 66.0 L673.8 69.4Z M855.3 69.4 L862.0 69.0 L866.5 69.3 L870.9 69.6 L875.3 70.0 L879.7 70.4 L879.9 74.0 L880.0 77.7 L880.0 79.5 L872.9 76.9 L868.1 75.3 L863.3 73.6 L858.6 72.0Z M816.6 51.0 L820.2 50.5 L823.9 50.0 L829.0 53.8 L829.7 57.2 L830.4 60.7 L825.9 61.5 L820.8 60.1 L819.9 57.1 L819.1 54.2Z M947.5 96.4 L952.0 96.7 L956.1 98.1 L960.2 99.4 L964.2 100.8 L968.0 102.2 L967.4 103.2 L963.2 102.7 L958.9 102.1 L954.1 100.3 L949.3 98.5Z M1005.9 112.0 L1008.5 111.2 L1011.0 111.4 L1013.5 111.6 L1015.9 111.9 L1015.9 115.4 L1014.1 115.9 L1012.2 116.4 L1007.8 114.1Z M307.6 357.9 L307.4 359.7 L307.3 361.6 L306.7 365.8 L306.1 370.1 L306.2 371.9 L306.4 373.8 L306.1 378.9 L306.0 384.0 L306.1 391.0 L306.7 391.0 L307.4 391.0 L308.1 391.0 L308.9 391.1 L309.9 391.3 L311.0 391.5 L311.8 394.1 L312.7 396.8 L313.7 399.4 L315.2 404.0 L315.3 410.7 L315.5 417.5 L316.5 423.3 L317.7 429.1 L317.8 437.0 L317.2 442.0 L316.6 446.9 L318.3 447.6 L320.1 448.3 L321.9 449.0 L323.6 454.0 L325.2 454.1 L327.0 454.2 L328.8 455.7 L330.7 457.3 L333.0 461.0 L335.5 464.7 L337.9 473.0 L340.0 472.6 L342.2 472.3 L344.5 474.1 L346.9 476.0 L349.3 477.9 L352.3 478.0 L355.3 478.2 L358.4 478.4 L361.2 481.4 L364.1 484.4 L367.1 487.4 L371.2 493.6 L375.5 499.8 L379.5 501.1 L383.5 502.5 L387.7 503.8 L389.0 511.5 L391.0 518.7 L393.1 525.9 L393.4 531.3 L393.7 536.6 L392.8 542.2 L391.9 547.7 L391.0 553.2 L388.0 559.0 L385.2 564.7 L383.8 571.0 L382.6 577.3 L380.9 584.8 L381.4 590.6 L381.9 596.4 L382.5 602.2 L383.9 607.4 L385.4 612.6 L386.8 617.8 L388.2 623.9 L389.6 629.9 L390.2 635.7 L391.0 641.4 L391.6 647.0 L392.2 652.5 L393.0 657.2 L393.9 661.9 L394.8 666.6 L394.3 670.2 L393.9 673.7 L391.2 672.7 L388.6 671.8 L386.3 671.9 L384.0 672.0 L382.7 673.1 L381.5 674.1 L380.4 675.1 L379.9 677.0 L379.6 678.8 L379.3 680.7 L379.1 683.5 L381.1 687.3 L383.1 691.1 L385.7 695.5 L388.3 699.8 L391.4 706.0 L392.9 711.0 L395.3 715.8 L396.6 718.8 L397.9 721.7 L399.6 725.5 L401.3 728.3 L403.0 731.0 L404.7 733.7 L405.9 735.5 L407.1 737.4 L408.3 739.1 L406.8 737.6 L405.4 736.0 L404.0 734.4 L402.7 732.9 L402.5 730.5 L401.2 729.0 L404.5 733.0 L407.8 736.9 L413.0 742.8 L415.6 745.7 L418.2 748.6 L420.8 751.5 L421.1 751.7 L421.3 752.0 L421.6 752.3 L421.9 752.6 L421.3 752.0 L420.7 751.4 L420.2 750.8 L419.7 750.2 L419.2 749.7 L422.3 753.0 L425.4 756.3 L428.6 759.6 L428.0 759.0 L427.5 758.4 L426.9 757.9 L426.4 757.4 L425.9 756.9 L429.2 760.2 L432.5 763.6 L435.9 766.9 L438.2 769.1 L440.6 771.4 L443.0 773.6 L445.4 775.8 L447.8 778.0 L449.3 779.4 L450.8 780.8 L452.3 782.1 L453.9 783.5 L457.6 786.7 L461.2 789.8 L465.0 792.9 L467.3 794.7 L469.6 796.6 L471.9 798.4 L474.3 800.3 L476.7 802.1 L479.1 803.9 L483.8 807.4 L488.5 810.8 L491.9 813.2 L495.3 815.6 L498.8 818.0 L502.3 820.3 L505.8 822.6 L509.3 824.9 L508.2 824.1 L507.0 823.4 L505.9 822.7 L504.8 822.0 L503.7 821.3 L502.6 820.5 L501.6 819.8 L500.5 819.1 L499.5 818.4 L498.5 817.8 L497.5 817.1 L496.5 816.4 L495.5 815.7 L494.5 815.1 L491.7 813.1 L488.8 811.1 L486.0 809.1 L483.2 807.0 L480.4 805.0 L477.7 802.9 L475.0 800.8 L472.3 798.7 L469.6 796.6 L467.0 794.5 L464.4 792.4 L461.8 790.2 L459.2 788.1 L456.7 785.9 L454.2 783.7 L451.7 781.5 L448.7 778.9 L445.7 776.2 L442.8 773.5 L439.9 770.7 L437.0 767.9 L434.1 765.1 L431.3 762.3 L428.4 759.4 L425.7 756.6 L422.9 753.7 L420.2 750.7 L417.4 747.8 L414.8 744.8 L412.1 741.8 L409.5 738.8 L406.9 735.8 L404.3 732.7 L401.7 729.6 L399.2 726.5 L396.7 723.4 L394.3 720.2 L391.8 717.1 L389.4 713.9 L387.1 710.6 L384.7 707.4 L382.4 704.2 L380.1 700.9 L377.9 697.6 L375.6 694.3 L373.4 691.0 L371.3 687.6 L369.1 684.3 L367.0 680.9 L365.0 677.5 L362.9 674.1 L360.9 670.7 L359.0 667.2 L357.0 663.8 L355.1 660.4 L353.3 656.9 L351.4 653.5 L349.6 650.0 L347.9 646.5 L346.1 642.9 L344.4 639.4 L342.7 635.9 L341.1 632.3 L339.4 628.7 L337.9 625.1 L336.3 621.5 L334.8 617.9 L333.3 614.2 L331.8 610.6 L330.4 606.9 L329.0 603.3 L327.6 599.6 L326.3 595.9 L325.0 592.2 L323.7 588.4 L322.5 584.7 L321.3 581.0 L320.1 577.2 L318.9 573.5 L317.8 569.7 L316.8 565.9 L315.7 562.1 L314.7 558.3 L313.7 554.5 L312.8 550.7 L311.9 546.8 L311.0 543.0 L310.2 539.2 L309.4 535.3 L308.6 531.4 L307.9 527.6 L307.2 523.7 L306.5 519.8 L305.9 516.0 L305.3 512.1 L304.7 508.2 L304.2 504.3 L303.7 500.4 L303.2 496.5 L302.8 492.5 L302.4 488.6 L302.0 484.7 L301.7 480.8 L301.4 476.9 L301.1 472.9 L300.9 469.0 L300.7 465.1 L300.5 461.1 L300.4 457.2 L300.3 453.3 L300.3 449.3 L300.3 445.4 L300.3 441.5 L300.3 437.5 L300.4 433.6 L300.5 429.7 L300.7 425.7 L300.9 421.7 L301.1 417.8 L301.4 413.8 L301.6 409.8 L302.0 405.8 L302.4 401.8 L302.8 397.7 L303.2 393.7 L303.7 389.6 L304.2 385.6 L304.8 381.5 L305.4 377.4 L306.0 373.3 L306.7 369.1 L307.5 365.0 L307.5 364.8 L307.5 364.6 L307.6 364.5 L307.6 364.3 L307.6 364.1 L307.7 363.9 L307.7 363.7 L307.8 363.4 L307.8 363.2 L307.8 363.0 L307.9 362.7 L307.9 362.5 L308.0 362.2 L308.0 362.0 L308.1 361.7 L308.1 361.4 L308.2 361.1 L308.2 360.8 L308.3 360.5 L308.4 360.2 L308.4 359.9 L308.5 359.5 L307.2 358.9 L307.3 358.6 L307.5 358.2Z" fill="none" stroke="#ece54a" stroke-width="1.25" stroke-linejoin="round"/>
<path d="M586.3 141.5 L591.3 139.3 L592.4 141.6 L588.3 143.7Z M595.8 142.1 L599.5 141.8 L598.8 144.3 L596.1 144.5Z M610.8 136.7 L614.7 135.6 L613.7 139.7 L609.7 140.8Z M616.7 131.4 L619.5 131.2 L618.9 133.6 L616.1 133.9Z M577.8 138.4 L579.5 138.2 L578.8 140.7 L577.0 140.9Z M493.8 273.5 L495.6 273.4 L495.0 276.6 L493.2 276.8Z M484.6 254.9 L486.4 254.7 L485.9 256.8 L484.2 256.9Z M487.1 276.3 L487.6 278.3 L485.8 278.5Z M502.6 262.3 L504.9 262.1 L504.5 264.2 L502.2 264.4Z M491.6 258.2 L494.0 259.0 L491.1 260.3Z M834.1 443.5 L837.1 444.8 L835.3 447.9 L833.4 446.1Z M844.5 427.2 L845.7 428.5 L844.5 429.7Z M858.2 402.2 L863.1 403.5 L860.8 408.5 L857.7 406.0Z M1147.0 563.8 L1147.8 565.4 L1146.3 568.6Z M1150.0 569.6 L1150.4 571.3 L1149.2 571.6Z M1151.9 574.6 L1152.0 576.3 L1151.1 577.0Z M972.9 96.7 L975.5 97.3 L976.9 100.3 L973.9 99.1Z M961.8 87.4 L962.0 87.0 L959.4 86.4 L959.8 87.0Z M952.9 82.4 L953.6 81.1 L953.9 83.2Z M949.8 77.4 L953.2 77.7 L953.2 79.1 L949.6 77.9Z M954.4 88.9 L955.8 89.2 L955.9 90.3Z M942.8 80.8 L934.1 75.6 L932.3 74.8 L940.0 79.3 L945.6 82.4Z M952.8 89.1 L953.8 88.8 L953.9 89.9Z M949.9 86.4 L950.2 85.9 L949.1 85.2Z M966.4 92.5 L968.1 93.4 L966.5 93.6Z M970.5 101.6 L972.4 100.9 L972.5 102.0Z M941.4 91.3 L941.7 90.8 L940.3 90.5Z M916.8 76.7 L918.3 75.9 L916.2 74.5 L915.7 76.0Z M905.7 66.7 L906.8 66.4 L909.6 68.8 L907.1 67.9Z M875.6 83.8 L878.0 84.1 L877.4 84.6Z M850.1 94.4 L852.0 95.2 L850.4 95.8Z M949.9 90.1 L950.2 89.7 L948.9 89.4Z M956.5 93.1 L957.9 93.4 L957.6 93.9Z M962.4 93.3 L963.7 93.5 L963.4 94.0Z M941.5 71.9 L943.2 72.7 L941.7 72.9Z M934.9 67.4 L936.5 68.2 L935.3 67.9Z" fill="none" stroke="#e6e23a" stroke-width="0.9"/>
<path d="M364.0 673.7 L358.0 661.8 L348.8 646.0 L346.6 643.5 L344.7 640.9 L340.8 632.5 L337.1 623.9 M404.7 733.7 L398.4 725.5 L392.1 718.1 L386.2 710.6 L382.7 706.3 L379.5 702.0 L384.5 709.4 L389.8 716.6 M379.5 702.0 L373.6 691.8 L373.0 689.6 L372.6 687.3 L364.0 673.7 M364.0 673.7 L368.9 684.3 L366.7 681.9 L364.8 679.5 L358.1 667.1 L353.1 658.8 L348.5 650.5 L344.2 642.2 M314.9 404.0 L313.1 414.3 L311.6 424.6 L309.4 424.7 L307.5 424.8 L308.4 413.7 L309.6 402.6 L311.0 391.5 M307.5 424.8 L305.7 426.9 L304.2 428.8 L302.2 432.7 L302.8 422.3 L303.7 411.8 L304.8 401.4 L306.1 391.0 M302.2 432.7 L301.9 423.5 L301.9 414.5 L302.1 405.6 L302.5 399.3 L303.4 389.6 L304.5 379.9 L305.8 370.4 M302.5 399.3 L301.4 405.1 L300.5 410.7 L300.3 411.0 M337.1 623.9 L332.9 613.4 L328.9 602.9 L326.0 596.6 L323.4 590.3 L319.7 578.6 L316.4 566.7 M732.6 82.7 L735.0 90.0 L740.3 101.3 L728.6 106.6 L716.7 112.1 L702.3 120.2 L689.8 124.1 L677.2 128.1 L664.6 132.2 L663.3 140.6 M619.3 143.4 L630.1 142.6 L641.1 141.8 L652.1 141.2 L663.3 140.6 L662.8 144.0 M662.8 144.0 L661.1 155.3 L649.9 155.9 L638.9 156.5 L627.9 157.2 L625.8 169.0 L623.7 181.1 L612.8 185.6 L609.0 202.2 L595.7 203.1 L582.5 204.0 L569.7 205.0 M662.8 144.0 L675.0 150.0 L687.7 156.4 L700.8 162.9 L711.1 168.7 L721.6 174.7 L732.3 180.8 L743.2 187.0 L754.3 193.5 L765.6 200.0 L772.5 208.2 L788.5 213.6 L790.0 222.0 L800.2 221.1 L818.1 218.3 L835.7 203.5 L847.2 197.5 L858.4 191.6 L869.3 186.0 L879.9 180.4 M700.8 162.9 L682.8 163.5 L683.2 173.3 L683.7 183.4 L684.2 193.8 L684.8 204.4 L685.4 215.2 L686.2 226.4 L686.9 237.7 L687.8 249.3 L689.6 260.3 L677.9 260.6 L666.3 260.8 L654.7 261.1 L643.3 261.5 L624.8 266.6 L618.6 261.3 L609.9 270.5 M609.9 270.5 L598.3 256.7 L587.2 251.9 L576.1 255.7 L565.3 259.6 M609.9 270.5 L613.1 283.9 L616.6 297.5 M574.9 315.2 L590.0 306.5 L590.9 296.1 L603.6 296.8 L616.6 297.5 L624.2 303.1 L644.3 296.7 L649.5 309.5 L654.8 322.4 L650.6 336.9 L657.5 344.1 L646.4 354.0 L636.7 356.5 L626.5 343.4 L623.4 336.2 L617.0 325.6 L601.9 327.2 L592.1 338.2 M558.6 286.3 L578.0 283.1 L590.6 287.0 L577.3 289.9 L558.0 291.9 M558.1 299.8 L576.7 295.6 L590.9 296.1 M611.6 363.1 L626.5 343.4 M657.5 393.4 L660.3 375.9 L647.1 367.4 L650.0 353.9 L646.4 354.0 M654.8 322.4 L676.6 317.3 L685.0 319.6 L701.3 323.6 L717.8 327.7 L719.0 331.3 L721.3 345.9 L712.4 363.2 L717.2 384.3 M685.0 319.6 L687.9 302.9 L699.1 292.2 L705.3 284.0 L717.5 274.7 L730.7 269.5 L743.9 264.3 L754.6 265.4 L763.1 281.5 L776.5 292.0 L781.5 301.4 L763.3 312.0 L751.1 310.8 L734.6 311.4 L718.0 312.1 L717.8 327.7 M751.1 310.8 L757.3 320.4 L758.5 333.1 L759.8 345.9 L761.1 366.8 L767.4 371.8 M763.3 312.0 L769.7 332.5 L771.0 347.1 L772.4 361.9 L772.4 370.6 M781.5 301.4 L796.1 303.9 L796.5 320.6 L787.0 336.2 L786.0 350.9 L786.1 368.2 M796.1 303.9 L801.5 282.9 L818.3 286.1 L835.1 289.3 L856.2 290.9 L870.9 286.8 L885.2 288.4 L899.4 290.1 L910.9 283.7 M754.6 265.4 L767.7 264.0 L780.7 262.6 L793.7 261.2 L801.3 245.8 L800.8 233.3 L800.2 221.1 M910.9 283.7 L908.9 275.8 L918.1 262.5 L926.7 249.5 L926.2 237.3 L925.5 225.2 L924.7 213.5 L917.8 200.2 L910.8 187.3 L903.6 190.6 L891.8 185.5 L879.9 180.4 M826.0 73.5 L825.9 80.3 L825.8 87.4 L820.7 93.2 L837.8 106.2 L844.5 120.8 L847.6 130.8 L850.8 141.1 L854.0 151.8 L849.5 155.1 L860.8 169.1 L879.9 180.4 M857.6 99.7 L859.1 105.5 L849.5 109.8 L844.5 120.8 M910.8 187.3 L921.4 191.9 L931.9 196.4 L942.3 201.1 L952.6 205.7 L962.8 210.5 L972.9 215.2 L982.8 220.0 L992.6 224.9 L1002.2 229.8 L1001.0 224.8 L1009.4 225.9 L1006.7 216.1 L1003.9 206.6 M974.0 125.8 L975.7 136.4 L981.1 143.9 L984.6 152.2 L988.1 160.7 L991.4 169.4 L994.7 178.4 L997.9 187.6 L1000.9 197.0 L1003.9 206.6 M1003.9 206.6 L1012.7 207.8 L1021.1 209.1 L1029.4 210.5 L1037.4 211.8 L1045.1 213.2 L1052.6 214.6 L1059.8 216.0 L1066.8 217.5 L1073.5 219.0 L1079.9 220.5 L1086.1 222.0 M1002.2 229.8 L1005.3 242.5 L1008.2 255.6 L1011.0 268.9 L1001.5 270.0 L999.7 282.6 L997.6 295.5 L1003.5 307.4 L1009.3 319.5 L1014.0 331.0 L1018.5 342.6 L1028.6 352.3 M858.0 389.8 L865.5 376.8 L872.8 364.0 L884.6 363.0 L896.2 362.0 L903.5 346.5 L910.5 331.1 L924.3 309.4 L917.0 290.8 L910.9 283.7 M917.0 290.8 L921.8 302.8 L926.6 314.9 L931.2 327.1 L918.0 326.7 L927.9 341.7 L937.7 356.9 L928.8 376.0 L930.6 391.9 L946.8 414.1 L947.0 427.5 M937.7 356.9 L948.9 355.3 L959.8 353.6 L970.5 352.0 L973.6 340.5 L986.0 333.3 L997.9 326.3 L1009.3 319.5 M1028.6 352.3 L1042.6 370.1 L1056.0 387.8 L1047.1 388.7 L1037.9 389.5 L1024.9 394.4 L1011.5 399.4 L997.0 393.1 L982.0 386.8 L973.1 396.2 L973.4 405.9 L960.3 409.9 L946.8 414.1 M874.2 419.8 L892.1 421.1 L903.8 421.2 L915.4 421.2 L929.1 421.3 L947.0 427.5 M874.3 436.0 L892.2 436.0 L892.1 421.1 M889.2 497.0 L898.8 490.7 L900.2 478.3 L914.2 475.1 L927.9 471.9 L929.2 455.8 L922.4 446.0 L925.8 431.1 L915.4 421.2 M901.4 520.1 L911.1 505.3 L926.9 508.6 L947.3 497.3 L948.0 475.3 L964.5 455.6 L966.0 443.5 L967.3 431.3 L968.5 419.1 L973.4 405.9 M901.4 520.1 L911.1 505.3 L899.4 510.4 M902.4 523.7 L914.7 522.9 L926.9 522.0 L938.9 521.1 L950.7 520.1 L954.0 536.7 L966.4 540.4 L978.5 544.0 L990.9 539.4 L1003.0 534.7 L1002.3 548.1 L1001.4 561.2 L1003.0 579.1 L1019.2 574.6 L1017.1 586.3 L1014.9 597.8 L997.4 599.3 L995.5 611.0 L993.5 622.5 L991.4 633.8 L1001.0 647.0 M886.5 653.0 L898.3 652.8 L909.9 652.7 L921.4 651.9 L932.7 651.2 L943.9 650.3 L954.8 649.4 L964.1 650.7 L973.2 651.9 L982.1 653.0 L991.7 650.0 L1001.0 647.0 L1016.9 647.1 M977.8 656.4 L975.0 668.9 L972.1 681.0 L969.0 692.8 L960.0 693.9 L956.5 706.9 L952.9 719.6 L949.7 730.1 L946.4 740.3 L942.9 750.1 M912.0 755.5 L919.7 755.4 L933.0 755.3 L942.9 750.1 M952.9 719.6 L953.7 727.9 L954.3 736.0 L974.1 722.7 L985.8 721.3 L997.1 719.8 L1013.2 701.4 L1025.0 693.0 L1036.6 684.5 M1016.9 647.1 L1020.0 663.0 L1029.1 670.8 L1036.6 684.5 M1016.9 647.1 L1030.6 646.2 L1050.5 623.9 L1062.5 619.2 M1019.2 574.6 L1030.3 577.0 L1045.9 579.9 L1056.9 597.7 L1063.0 597.0 L1065.4 584.3 L1054.9 583.3 L1058.1 568.6 L1061.0 553.6 L1070.4 546.8 L1079.6 540.1 L1086.4 545.9 L1093.0 551.7 L1093.3 566.4 L1089.4 580.8 L1085.1 595.1 L1074.3 603.1 L1062.9 611.2 L1062.5 619.2 L1069.8 623.5 L1076.6 627.6 L1074.1 638.8 L1071.4 649.8 L1064.8 664.4 L1049.3 683.8 L1036.6 684.5 M1049.3 683.8 L1048.0 692.7 L1046.6 701.3 L1042.4 711.1 L1038.1 720.7 L1043.4 720.1 M993.6 750.5 L1003.3 743.6 L1011.5 743.2 L1007.3 750.3 L997.5 756.4 L993.6 750.5 M1030.1 725.5 L1038.1 720.7 L1041.1 714.1 L1036.6 713.6 L1031.4 720.1 L1030.1 725.5 M1093.3 566.4 L1100.0 572.7 L1098.6 583.1 L1097.0 593.3 L1101.1 606.1 L1092.4 625.6 L1089.0 618.8 L1093.4 603.6 L1085.1 595.1 M1135.7 557.2 L1128.8 562.4 L1121.5 567.5 L1115.0 569.5 L1108.1 571.6 L1100.6 572.6 M1137.5 497.6 L1129.8 480.0 L1123.0 473.1 L1115.8 466.0 L1108.0 458.8 L1100.0 459.0 L1091.6 459.1 L1082.8 459.2 L1084.7 475.1 L1081.7 475.2 L1076.9 487.2 L1071.9 499.4 L1071.8 510.6 L1071.6 521.9 L1079.6 540.1 M1082.8 459.2 L1075.8 463.9 L1075.9 442.2 L1080.5 434.2 L1088.6 422.9 L1084.3 408.1 L1075.1 395.4 L1065.7 391.6 L1056.0 387.8 M1108.0 458.8 L1108.1 444.3 L1114.5 428.9 L1110.8 415.0 L1106.7 401.0 L1099.6 403.4 L1092.1 405.7 L1084.3 408.1 M1106.7 401.0 L1118.7 397.2 L1124.9 399.7 L1132.5 408.6 L1140.2 411.1 L1147.5 405.1 L1151.8 406.4 L1148.2 417.8 L1148.6 430.8 L1148.8 443.8 L1148.7 456.9 L1151.5 464.2 M1151.8 406.4 L1156.3 399.5 L1160.4 398.2 L1164.3 397.1 L1167.1 387.0 L1169.4 377.1 L1171.3 367.5 L1168.0 366.9 L1164.0 363.0 L1159.7 359.0 L1155.2 355.1 L1151.4 344.7 L1147.4 334.3 L1146.5 334.1 M1106.7 401.0 L1103.4 386.9 L1099.9 372.9 L1096.0 358.8 L1102.7 352.9 L1101.8 342.2 L1100.8 331.6 L1102.6 317.4 L1108.0 311.1 L1105.9 294.1 L1113.3 290.6 L1119.7 293.8 L1130.4 301.5 L1141.6 318.9 L1144.2 317.5 M1105.9 294.1 L1104.3 280.9 L1102.3 268.0 L1108.5 261.3 M1141.6 318.9 L1142.0 333.3 L1146.5 334.1 L1147.2 329.5 M1028.6 352.3 L1024.4 346.4 L1030.3 328.7 L1043.0 333.5 L1055.2 338.2 L1063.9 337.8 L1067.2 333.7 L1080.6 338.1 L1085.9 318.5 L1090.4 313.8 L1092.5 329.7 L1100.6 343.2 L1102.7 352.9 M1034.3 141.7 L1045.5 156.2 M1046.1 156.3 L1052.9 160.3 L1057.3 156.6 L1048.0 144.7 L1052.0 144.0 L1055.6 143.5 L1048.0 134.4 L1045.8 136.5 L1043.3 138.6 L1035.2 133.8 L1040.1 142.2 L1043.1 149.1 L1046.1 156.3 M1027.4 120.6 L1033.4 125.1 L1033.5 129.9 L1038.5 131.4 L1043.3 132.9 L1048.0 134.4 L1050.6 132.9 L1053.0 131.5 L1049.1 124.0 L1044.9 116.9 L1040.8 115.6 L1036.5 114.3 L1032.1 112.6 L1027.5 110.8 L1021.3 108.5 L1022.7 112.7 M1055.6 143.5 L1064.9 150.2 L1073.8 157.0 L1083.5 166.0 L1092.9 175.0 L1099.8 179.0 L1100.2 174.8 M1133.5 281.5 L1132.3 272.6 L1136.4 273.8 L1141.0 276.1 L1145.3 278.4 L1148.0 281.0 L1148.2 271.6 L1151.2 270.9 L1153.8 270.2 L1156.0 269.6 L1160.9 280.3 L1165.5 291.0 M1156.0 269.6 L1157.2 268.1 L1158.1 266.6 L1158.8 265.2 L1155.9 257.4 L1152.9 249.7 L1149.5 243.3 L1145.4 233.9 L1142.1 227.2" fill="none" stroke="#e8de45" stroke-width="1.1" stroke-linejoin="round"/>
<path d="M509.6 71.3 L505.7 72.2 L504.0 74.7 M498.6 78.6 L495.5 76.6 L492.4 79.9 L489.0 81.4 M486.6 87.6 L480.9 89.3 M477.5 91.9 L473.7 93.9 M479.4 96.6 L474.8 99.0 L472.6 95.4 L472.4 98.4 L469.5 98.7 L472.6 101.9 L466.2 100.2 M464.6 103.5 L466.5 106.4 L462.3 103.1 M459.7 104.2 L463.1 106.9 L462.1 109.1 L460.6 110.0 L458.9 113.8 L455.8 114.1 L454.2 113.2 L454.0 113.0 L453.1 117.9 L450.4 117.0 L449.4 117.0 L448.2 120.5 L446.2 117.6 M445.0 120.1 L443.1 122.4 M438.8 127.6 L436.8 130.5 L433.9 130.5 L429.4 136.0 L427.7 138.4 L423.5 142.9 L419.1 143.5 M343.2 261.1 L341.1 265.4 L343.9 268.1 L339.9 274.1 M336.2 277.5 L339.0 280.2 L334.2 283.5 L335.0 289.2 L330.7 291.2 M333.7 293.4 L333.5 293.8 L329.7 298.0 L333.2 298.5 M327.5 299.0 L325.3 299.6 L331.2 304.6 L329.6 306.4 L324.6 304.6 M325.0 305.5 L329.6 308.3 L326.5 309.2 L328.2 314.6 L328.2 313.3 L321.5 315.4 L321.7 318.5 L324.0 321.2 M321.9 317.3 L317.1 322.2 L319.1 326.0 L316.5 328.1 L316.0 332.2 L314.2 335.9 L313.6 339.3 L314.9 344.1 L313.3 350.1 L310.0 352.0 M309.5 356.4 L310.6 360.7 L309.9 363.6 M307.5 364.7 L310.7 368.4 L309.1 371.9 L307.7 373.3 L309.2 378.7 L305.1 380.7 L305.4 381.1 L305.8 384.9 L303.6 389.9 L305.4 390.7 L305.1 394.1 L306.1 396.4 L304.8 400.1 L303.4 402.4 L303.6 407.8 L303.7 410.7 M305.0 411.8 L302.6 413.8 L303.6 418.0 L305.3 420.1 L300.7 423.5 L305.2 426.8 L302.1 431.1 L302.3 435.1 L300.3 437.7 L301.2 440.7 L300.3 440.7 L304.3 445.0 M303.8 446.3 L300.3 449.9 L300.8 454.2 L302.0 461.8 L303.8 468.2 L300.9 473.7 L304.7 478.2 L302.7 485.0 L304.7 490.5 L303.9 493.8 L305.8 499.7 L304.5 505.0 L306.4 508.9 L307.6 514.2 L307.3 520.1 L307.7 525.6 L311.5 533.5 L312.5 535.5 L311.6 544.3 L312.2 548.5 L316.0 553.3 L314.9 560.2 L317.9 565.0 L320.6 567.6 L319.8 575.3 L320.9 578.4 L322.7 586.4 L325.0 591.2 L327.8 596.5 L330.1 600.7 L330.7 607.7 L333.1 610.8 L336.4 615.4 L336.7 623.1 L340.4 626.1 L344.1 630.6 M342.9 635.1 L349.3 641.5 L348.7 643.8 L350.7 649.0 L354.1 655.0 L356.2 662.1 L358.3 665.8 L362.6 668.5 L364.8 675.0 L368.3 680.2 L371.0 682.5 L374.2 690.2 L379.1 693.2 L380.4 697.0 L383.5 702.7 M382.1 702.7 L383.6 706.4 L386.9 710.6 L390.7 716.0 L394.7 719.4 L398.9 725.8 L402.9 727.9 L404.6 732.2 L409.7 738.5 L411.9 740.6 L416.4 746.4 L418.6 748.9 L421.9 752.9 L426.7 758.1 L429.6 760.7 L436.4 765.9 L439.2 770.5 L442.2 773.3 L447.9 775.5 L451.8 780.0 L454.6 784.0 L457.4 786.8 L462.8 791.1 L467.2 791.9 L472.3 796.2 L475.5 801.5 L480.5 803.6 L486.4 808.7 L489.4 810.6 L492.8 812.6 M993.7 69.7 L995.8 73.0 L1002.9 74.6 L1005.8 77.0 L1012.5 80.8 L1014.6 83.9 L1018.6 87.3 L1023.4 89.3 L1026.3 95.8 L1029.7 93.6 L1035.6 100.0 L1039.3 103.1 L1042.4 104.4 L1047.2 109.1 L1050.0 111.0 L1053.2 117.3 L1058.4 119.3 L1059.4 122.8 L1065.5 125.9 L1066.8 132.0 L1071.2 132.5 L1075.4 136.5 L1078.5 139.7 L1081.0 146.1 L1084.2 147.6 M1088.7 152.2 L1090.0 154.4 L1092.8 160.2 L1096.6 162.8 L1100.2 167.8 M1103.7 171.3 L1106.2 175.3 L1110.7 178.6 L1113.9 184.8 M1114.3 186.1 L1118.8 189.5 L1122.3 197.4 L1123.8 199.8 L1125.8 205.8 L1128.7 208.5 L1132.2 211.1 L1134.5 218.0 L1137.8 222.5 L1140.7 227.2 L1141.1 231.6 M1144.3 236.5 L1148.4 240.3 L1148.1 242.4 L1151.3 246.6 M1154.0 250.9 L1155.0 259.5 L1157.4 262.8 L1159.0 266.2 L1161.9 269.8 L1164.9 275.5 L1164.7 282.0 L1167.1 283.1 L1169.5 287.5 L1170.7 295.3 L1172.8 299.7 L1174.1 302.8 L1176.0 309.3 L1177.3 313.2 L1177.8 319.2 L1178.6 324.5 L1183.3 328.1 L1184.9 333.4 L1182.8 337.0 L1186.1 341.2 L1184.8 345.9 L1186.1 351.3 M1022.9 95.0 L1027.6 98.4 L1031.2 101.3 L1039.0 104.6 L1038.5 109.8 L1042.0 114.2 L1049.5 118.0 L1052.2 119.8 M1058.1 123.0 L1062.2 128.6 L1065.5 133.7 L1070.7 137.4 L1073.2 144.7 L1079.3 145.4 L1083.1 147.5 L1083.7 155.2 L1088.8 161.2 M1090.3 163.6 L1098.2 168.4 M1099.1 173.3 L1103.5 174.5 L1109.5 180.4 L1111.7 182.8 L1112.8 189.5 L1115.2 194.8 L1122.5 199.0 L1123.9 202.9 L1128.1 209.8 L1129.4 213.1 L1134.8 218.5 L1136.0 222.6 L1138.9 228.1 M1139.7 233.1 L1144.4 239.3 L1147.1 246.0 L1151.1 250.0 L1150.2 257.0 L1151.9 259.5 L1153.1 265.2 L1158.9 270.7 L1157.3 275.2 L1164.4 281.3 L1166.1 286.4 L1169.5 291.7 L1166.8 298.1 L1168.0 302.7 L1173.2 305.9 L1175.5 311.4 L1178.0 318.7 L1175.1 326.8 L1178.7 331.0" fill="none" stroke="#e8e23a" stroke-width="1" stroke-linejoin="round"/>
<circle cx="383" cy="190.500" r="0.9" fill="#e8e23a"/>
</g></svg>
<div id="topbar"></div>
<div class="tb" style="left:6px;width:81px"></div>
<div class="tb" style="left:88px;width:39.5px"></div>
<div class="tb" style="left:128px;width:39.5px"></div>
<div class="tb" style="left:168.5px;width:39.5px"></div>
<div class="tb" style="left:208.5px;width:39.5px"></div>
<svg class="abs" style="left:0;top:0" width="260" height="45" viewBox="0 0 260 45">
<circle cx="26.8" cy="30" r="6.9" fill="none" stroke="#cdcdcd" stroke-width="1.4"/><path d="M26.8 24 V30.3 H32.6" fill="none" stroke="#cdcdcd" stroke-width="1.2"/>
<path d="M104.2 24.2 L113.8 30 L104.2 35.8Z" fill="#dedede"/>
<circle cx="147.5" cy="30" r="5.8" fill="#e10000"/>
<path d="M181 23.500 H195 L199 30.200 H177Z" fill="#858585"/><path d="M180 29 H196 L200.300 37.4 H175.800Z" fill="#d9d9d9"/>
<path d="M224.200 37.8 C222.300 31.5 224.300 27.2 229.800 26.6 V23 L236.600 28.400 L229.800 33.6 V30.3 C226.600 30.600 225 33 225.800 37.8Z" fill="#3874d8"/>
</svg>
<div class="cb red" style="left:6.6px"></div>
<div class="cb red" style="left:102.5px"></div>
<div class="cb blue" style="left:198.4px"></div>
<div class="cb blue" style="left:294.3px"></div>
<div class="cb blue" style="left:390.2px"></div>
<div class="cb olive" style="left:486.1px"></div>
<div class="cb olive" style="left:582.0px"></div>
<div class="cb olive" style="left:677.9px"></div>
<div class="cb green" style="left:773.8px"></div>
<div class="cb green" style="left:869.7px"></div>
<div class="cb green" style="left:965.6px"></div>
<div class="cb grey" style="left:1061.5px"></div>
<div class="cb grey" style="left:1157.4px"></div>
<svg class="abs" style="left:0;top:0" width="1260" height="72" viewBox="0 0 1260 72">
<path d="M16.6 55.3 L19.6 55.3 L19.6 52.3 M12.2 51.3 L15.6 51.3 L15.6 47.9 M16.6 59.7 L19.6 59.7 L19.6 62.7 M12.2 63.7 L15.6 63.7 L15.6 67.1 M27.0 55.3 L24.0 55.3 L24.0 52.3 M31.4 51.3 L28.0 51.3 L28.0 47.9 M27.0 59.7 L24.0 59.7 L24.0 62.7 M31.4 63.7 L28.0 63.7 L28.0 67.1 " fill="none" stroke="#d9a3a3" stroke-width="1.7"/>
<path d="M116.4 56.4 L116.4 47.9 L113.7 50.3 L109.9 46.7 L106.7 49.9 L110.3 53.7 L107.9 56.4Z M116.4 58.6 L116.4 67.1 L113.7 64.7 L109.9 68.3 L106.7 65.1 L110.3 61.3 L107.9 58.6Z M118.6 56.4 L118.6 47.9 L121.3 50.3 L125.1 46.7 L128.3 49.9 L124.7 53.7 L127.1 56.4Z M118.6 58.6 L118.6 67.1 L121.3 64.7 L125.1 68.3 L128.3 65.1 L124.7 61.3 L127.1 58.6Z " fill="#d99a9a"/>
<circle cx="217" cy="57.4" r="10.2" fill="#8ea3c4"/>
<path d="M210.800 54.2 L223 53.4 L216.800 65Z" fill="#2b4068"/><path d="M217 46.5 V49 M217 65.500 V68 M206.300 57.4 H208.800 M225.200 57.4 H227.700" stroke="#2b4068" stroke-width="1.3"/><path d="M216.900 56 L211 60.500 M216.900 56 L221.500 61" stroke="#8ea3c4" stroke-width="0.9" opacity="0.8"/>
<path d="M305.500 63.5 A10.300 10.300 0 1 1 320 63.500 L316.600 62.5 L313.300 54.3 L312.100 54.3 L308.800 62.5Z" fill="#8ea3c4"/>
<path d="M305.6 52.2 L303.3 50.9 M309.2 48.9 L308.1 46.5 M316.2 48.9 L317.3 46.5 M319.8 52.2 L322.1 50.9 M320.9 56.3 L323.5 56.3 M304.5 56.3 L301.9 56.3 " stroke="#2f4670" stroke-width="1.5"/>
<rect x="308" y="64" width="9.5" height="2.8" fill="#8ea3c4"/>
<path d="M408.4 46.6 L413.2 49.4 L413.2 55.0 L408.4 57.8 L403.6 55.0 L403.6 49.4Z M403.2 56.6 L408.0 59.4 L408.0 65.0 L403.2 67.8 L398.4 65.0 L398.4 59.4Z M414.2 56.6 L419.0 59.4 L419.0 65.0 L414.2 67.8 L409.4 65.0 L409.4 59.4Z" fill="#8299bd"/>
<path d="M495.2 52.2 L495.5 49.5 Q496.7 46.800 497.9 49.5 L498.2 52.2Z M494.0 64.2 V55.8 Q494.0 53.2 496.7 53.2 Q499.4 53.2 499.4 55.800 V64.2Z M493.9 65.6 H499.5 V67.6 H493.9Z M502.8 52.2 L503.1 49.5 Q504.3 46.800 505.5 49.5 L505.8 52.2Z M501.6 64.2 V55.8 Q501.6 53.2 504.3 53.2 Q507.0 53.2 507.0 55.800 V64.2Z M501.5 65.6 H507.1 V67.6 H501.5Z M510.3 52.2 L510.6 49.5 Q511.8 46.800 513.0 49.5 L513.3 52.2Z M509.1 64.2 V55.8 Q509.1 53.2 511.8 53.2 Q514.5 53.2 514.5 55.800 V64.2Z M509.0 65.6 H514.6 V67.6 H509.0Z " fill="#b3ac7b"/>
<path d="M590.600 53.6 L592.400 53.6 L593.600 55.8 L602.500 55.8 L600 47 L602 47 L607.500 55.800 L609.500 55.9 Q611.200 56.4 611.200 57.1 Q611.200 57.900 609.500 58.2 L607.500 58.3 L602.300 67.2 L600.300 67.2 L602.500 58.4 L593.600 58.4 L592.400 60.4 L590.600 60.4Z" fill="#b3ac7b"/>
<path d="M685 57 L708.300 55 L705.300 58.7 L686.200 60.9Z M689 53 Q691 51.200 694.800 50.900 L696 49.700 L700.600 50 L700.800 52.7 L690 54.500Z" fill="#b3ac7b"/><path d="M682.500 64.2 H696 Q700 64.200 702.500 62.6 Q705 61.200 709.300 61.3" fill="none" stroke="#b3ac7b" stroke-width="1.900"/>
<path d="M780.300 67.8 L780.700 62.5 L784 57 L794.500 46.6 L796.500 47.2 L790 58.500 L784 67.2Z M785.300 68 L789.500 60 L798 48.800 L800 49.2 L794 60.500 L789 67.4Z M791 68 L795 61.500 L801.500 51.400 L803.400 51.6 L798.500 61.500 L794.500 67Z" fill="#8ec28f"/>
<circle cx="887.300" cy="57.3" r="10.3" fill="#8ec28f"/><path d="M886.500 57.6 L895 53.2 Q896.800 57 895.600 60.900Z" fill="#3f7541"/>
<path d="M992.9 55.7 L992.9 59.1 L990.2 59.1 L989.3 61.3 L991.2 63.2 L988.8 65.6 L986.9 63.7 L984.7 64.6 L984.7 67.3 L981.3 67.3 L981.3 64.6 L979.1 63.7 L977.2 65.6 L974.8 63.2 L976.7 61.3 L975.8 59.1 L973.1 59.1 L973.1 55.7 L975.8 55.7 L976.7 53.5 L974.8 51.6 L977.2 49.2 L979.1 51.1 L981.3 50.2 L981.3 47.5 L984.7 47.5 L984.7 50.2 L986.9 51.1 L988.8 49.2 L991.2 51.6 L989.3 53.5 L990.2 55.7Z" fill="#8ec28f"/><circle cx="983" cy="57.4" r="3.2" fill="#2f6630"/>
<path d="M1070 47.300 H1079 L1082.300 50.6 V63.700 H1070Z" fill="#c8c8c8"/><path d="M1084 48.800 H1086.700 V66.300 H1073.700 V65 H1084Z" fill="#bdbdbd"/>
<rect x="1164.700" y="47.300" width="20.6" height="2.1" fill="#c8c8c8"/><rect x="1164.700" y="65.100" width="20.6" height="2.2" fill="#c8c8c8"/><rect x="1166" y="51.800" width="18" height="11.4" fill="#c8c8c8"/><path d="M1168.300 61.300 L1180.600 55.400 L1179 60 Z M1168.300 53.400 H1182" fill="none" stroke="#505050" stroke-width="0.9"/>
</svg>
<div id="timebg"></div>
<span class="t" style="left:10.5px;top:4.8px;font-size:9.6px;color:#dadada;transform:scaleX(0.9374);">File</span>
<span class="t" style="left:41.0px;top:4.8px;font-size:9.6px;color:#dadada;transform:scaleX(1.0424);">View</span>
<span class="t" style="left:78.0px;top:4.8px;font-size:9.6px;color:#dadada;transform:scaleX(0.9946);">Game</span>
<span class="t" style="left:120.7px;top:4.8px;font-size:9.6px;color:#dadada;transform:scaleX(1.0232);">Map Settings</span>
<span class="t" style="left:194.3px;top:4.8px;font-size:9.6px;color:#dadada;transform:scaleX(1.0403);">Quick Jump</span>
<span class="t" style="left:263.0px;top:4.8px;font-size:9.6px;color:#dadada;transform:scaleX(1.0296);">Unit Orders</span>
<span class="t" style="left:330.0px;top:4.8px;font-size:9.6px;color:#6b6e71;transform:scaleX(1.0297);">Contacts</span>
<span class="t" style="left:385.0px;top:4.8px;font-size:9.6px;color:#dadada;transform:scaleX(1.0243);">Missions + Ref. Points</span>
<span class="t" style="left:498.7px;top:4.8px;font-size:9.6px;color:#dadada;transform:scaleX(1.0294);">Editor</span>
<span class="t" style="left:540.5px;top:4.8px;font-size:9.6px;color:#dadada;transform:scaleX(1.0388);">Help</span>
<span class="t" style="left:50.0px;top:21.2px;font-size:17px;color:#cfcfcf;transform:scaleX(0.9438);">×1</span>
<span class="t" style="left:36.3px;top:48.0px;font-size:8.8px;color:#dfc6c6;font-weight:700;transform:scaleX(0.9899);">Auto Engage</span>
<span class="t" style="left:36.3px;top:58.0px;font-size:8.8px;color:#dfc6c6;font-weight:700;transform:scaleX(1.0177);">Target</span>
<span class="t" style="left:132.5px;top:48.0px;font-size:8.8px;color:#dfc6c6;font-weight:700;transform:scaleX(1.0062);">Manual</span>
<span class="t" style="left:132.5px;top:58.0px;font-size:8.8px;color:#dfc6c6;font-weight:700;transform:scaleX(1.0057);">Engage Target</span>
<span class="t" style="left:234.0px;top:53.0px;font-size:8.8px;color:#cfd7e4;font-weight:700;">Plot Course</span>
<span class="t" style="left:330.0px;top:48.0px;font-size:8.8px;color:#cfd7e4;font-weight:700;transform:scaleX(1.0109);">Throttle &amp;</span>
<span class="t" style="left:330.0px;top:58.0px;font-size:8.8px;color:#cfd7e4;font-weight:700;">Altitude</span>
<span class="t" style="left:425.5px;top:48.0px;font-size:8.8px;color:#cfd7e4;font-weight:700;transform:scaleX(1.0113);">Formation</span>
<span class="t" style="left:425.5px;top:58.0px;font-size:8.8px;color:#cfd7e4;font-weight:700;transform:scaleX(0.9637);">Editor</span>
<span class="t" style="left:521.5px;top:53.0px;font-size:8.8px;color:#dedac2;font-weight:700;transform:scaleX(1.0292);">Magazines</span>
<span class="t" style="left:617.0px;top:48.0px;font-size:8.8px;color:#dedac2;font-weight:700;transform:scaleX(1.0129);">Aircraft</span>
<span class="t" style="left:617.0px;top:58.0px;font-size:8.8px;color:#dedac2;font-weight:700;transform:scaleX(0.9906);">Operations</span>
<span class="t" style="left:713.0px;top:48.0px;font-size:8.8px;color:#dedac2;font-weight:700;transform:scaleX(0.9712);">Boat</span>
<span class="t" style="left:713.0px;top:58.0px;font-size:8.8px;color:#dedac2;font-weight:700;transform:scaleX(0.9906);">Operations</span>
<span class="t" style="left:808.7px;top:48.0px;font-size:8.8px;color:#cfe2cf;font-weight:700;">Mounts &amp;</span>
<span class="t" style="left:808.7px;top:58.0px;font-size:8.8px;color:#cfe2cf;font-weight:700;">Weapons</span>
<span class="t" style="left:904.0px;top:53.0px;font-size:8.8px;color:#cfe2cf;font-weight:700;">Sensors</span>
<span class="t" style="left:1000.0px;top:48.0px;font-size:8.8px;color:#cfe2cf;font-weight:700;">Systems &amp;</span>
<span class="t" style="left:1000.0px;top:58.0px;font-size:8.8px;color:#cfe2cf;font-weight:700;transform:scaleX(1.0224);">Damage</span>
<span class="t" style="left:1095.7px;top:48.0px;font-size:8.8px;color:#d6d6d6;font-weight:700;transform:scaleX(1.0290);">Unit / Group</span>
<span class="t" style="left:1095.7px;top:58.0px;font-size:8.8px;color:#d6d6d6;font-weight:700;transform:scaleX(1.0172);">Doctrine</span>
<span class="t" style="left:1191.7px;top:48.0px;font-size:8.8px;color:#d6d6d6;font-weight:700;transform:scaleX(1.0168);">Mission</span>
<span class="t" style="left:1191.7px;top:58.0px;font-size:8.8px;color:#d6d6d6;font-weight:700;transform:scaleX(0.9559);">Editor</span>
<span class="t" style="left:3.0px;top:78.9px;font-size:16.4px;color:#f2f2f2;transform:scaleX(0.9054);">Time: jueves,</span>
<span class="t" style="left:101.3px;top:78.9px;font-size:16.4px;color:#f2f2f2;transform:scaleX(0.9591);">15 de agosto de 2019</span>
<span class="t" style="left:262.0px;top:78.9px;font-size:16.4px;color:#f2f2f2;transform:scaleX(0.9543);">- Zulu: 11:25:11 -</span>
<span class="t" style="left:387.0px;top:78.9px;font-size:16.4px;color:#f2f2f2;transform:scaleX(0.9410);">Local: 11:25:11</span>
<span class="t" style="left:497.8px;top:78.9px;font-size:16.4px;color:#f2f2f2;transform:scaleX(1.0283);">- 1 d to go -</span>
<span class="t" style="left:594.0px;top:78.9px;font-size:16.4px;color:#f2f2f2;transform:scaleX(0.9603);">Camera Alt: 8000000m</span>
<div id="dlg"><div id="dtitle"></div><div id="lpanel"></div><div id="rpanel"></div></div>
<svg class="abs" style="left:421px;top:209px" width="11" height="11" viewBox="0 0 11 11"><path d="M9.5 1.5 H4 Q1.5 1.5 1.5 4 V7 Q1.5 9.5 4 9.5 H9.5 M3.5 5.5 H8.5" fill="none" stroke="#4a6486" stroke-width="1.8"/><path d="M0 3 H3 M0 8 H3" stroke="#4a6486" stroke-width="1"/></svg>
<svg class="abs" style="left:985px;top:207px" width="90" height="16" viewBox="0 0 90 16"><path d="M4.5 8.5 H12.5" stroke="#222" stroke-width="1"/><rect x="39.5" y="4.5" width="7.5" height="7.5" fill="none" stroke="#222" stroke-width="1.1"/><path d="M75 4 L83 12 M83 4 L75 12" stroke="#333" stroke-width="0.95"/></svg>
<div class="li" style="top:228.7px;background:#5e5e5e;"></div>
<div class="li" style="top:244.5px;"></div>
<div class="li" style="top:260.2px;"></div>
<div class="li" style="top:276.0px;"></div>
<div class="abs" style="left:434.5px;top:593.5px;width:125.5px;height:7.5px;background:#5f6163"></div>
<svg class="abs" style="left:426px;top:593px" width="160" height="9" viewBox="0 0 160 9"><path d="M5.5 1.5 L2 4.5 L5.5 7.5Z M152.5 1.5 L156 4.5 L152.5 7.5Z" fill="#55585b"/></svg>
<div class="abs" style="left:469px;top:608px;width:62px;height:22px;box-sizing:border-box;border:1px solid #252525;background:linear-gradient(#484848,#363636);"></div>
<div class="abs" style="left:599px;top:287.5px;width:463px;height:1.6px;background:#d8d8d8"></div>
<svg class="abs" style="left:1069px;top:225px" width="14" height="414" viewBox="0 0 14 414"><path d="M3 20 L7.5 15 L12 20 M3 394 L7.5 399 L12 394" fill="none" stroke="#575757" stroke-width="1.8"/></svg>
<div class="sel" style="left:717.5px;top:339.8px;width:333.0px"><svg width="10" height="7" viewBox="0 0 10 7"><path d="M0.8 1 L5 5.4 L9.2 1" fill="none" stroke="#111" stroke-width="1.5"/></svg></div>
<div class="sel" style="left:733.7px;top:371.8px;width:289.0px"><svg width="10" height="7" viewBox="0 0 10 7"><path d="M0.8 1 L5 5.4 L9.2 1" fill="none" stroke="#111" stroke-width="1.5"/></svg></div>
<div class="sel" style="left:698.7px;top:403.8px;width:51.0px"><svg width="10" height="7" viewBox="0 0 10 7"><path d="M0.8 1 L5 5.4 L9.2 1" fill="none" stroke="#111" stroke-width="1.5"/></svg></div>
<div class="sel" style="left:599.0px;top:450.8px;width:377.5px"><svg width="10" height="7" viewBox="0 0 10 7"><path d="M0.8 1 L5 5.4 L9.2 1" fill="none" stroke="#111" stroke-width="1.5"/></svg></div>
<div class="sel" style="left:772.4px;top:483.2px;width:85.8px"><svg width="10" height="7" viewBox="0 0 10 7"><path d="M0.8 1 L5 5.4 L9.2 1" fill="none" stroke="#111" stroke-width="1.5"/></svg></div>
<div class="sel" style="left:670.0px;top:515.6px;width:90.5px"><svg width="10" height="7" viewBox="0 0 10 7"><path d="M0.8 1 L5 5.4 L9.2 1" fill="none" stroke="#111" stroke-width="1.5"/></svg></div>
<div class="sel" style="left:764.0px;top:547.4px;width:210.0px"><svg width="10" height="7" viewBox="0 0 10 7"><path d="M0.8 1 L5 5.4 L9.2 1" fill="none" stroke="#111" stroke-width="1.5"/></svg></div>
<div class="abs" style="left:657.5px;top:579.5px;width:328.5px;height:140.5px;background:#fff;border:1px solid #8a8a8a;box-sizing:border-box;"></div>
<div class="abs" style="left:658.5px;top:580.6px;width:326.5px;height:12px;background:#1f92e4"></div>
<div class="abs" style="left:658.5px;top:643.4px;width:326.5px;height:12.4px;background:#e3e3e3"></div>
<span class="t" style="left:436.7px;top:209.2px;font-size:9.6px;color:#111;transform:scaleX(0.9458);">Quick Battle Generator</span>
<span class="t" style="left:441.0px;top:231.3px;font-size:9.4px;color:#e6e6e6;transform:scaleX(0.9699);">Air &amp; Surface ASW</span>
<span class="t" style="left:441.0px;top:247.1px;font-size:9.4px;color:#e6e6e6;transform:scaleX(0.9904);">Simple A2A engagement</span>
<span class="t" style="left:441.0px;top:262.8px;font-size:9.4px;color:#e6e6e6;transform:scaleX(0.9833);">Submarine 1v1 duel</span>
<span class="t" style="left:441.0px;top:278.6px;font-size:9.4px;color:#e6e6e6;transform:scaleX(0.9765);">Surface 1v1 engagement</span>
<span class="t" style="left:599.0px;top:242.0px;font-size:21.9px;color:#ececec;font-weight:700;transform:scaleX(0.9691);">Air &amp; Surface ASW</span>
<span class="t" style="left:599.0px;top:297.0px;font-size:10.6px;color:#dcdcdc;font-style:italic;transform:scaleX(1.0695);">Create an engagement between an ASW helicopter equipped surface ship and a submarine</span>
<span class="t" style="left:599.0px;top:312.3px;font-size:10.6px;color:#dcdcdc;font-style:italic;transform:scaleX(1.0786);">and in a setting of your choice.</span>
<span class="t" style="left:599.0px;top:344.8px;font-size:10.4px;color:#e4e4e4;transform:scaleX(1.1101);-webkit-text-stroke:0.25px #e4e4e4;">You are in control of a:</span>
<span class="t" style="left:599.0px;top:376.9px;font-size:10.4px;color:#e4e4e4;transform:scaleX(1.0887);-webkit-text-stroke:0.25px #e4e4e4;">Your adversary controls a:</span>
<span class="t" style="left:599.0px;top:408.9px;font-size:10.4px;color:#e4e4e4;transform:scaleX(1.1005);-webkit-text-stroke:0.25px #e4e4e4;">Starting seperation</span>
<span class="t" style="left:599.0px;top:438.9px;font-size:10.4px;color:#e4e4e4;transform:scaleX(1.0984);-webkit-text-stroke:0.25px #e4e4e4;">Your adversary&#x27;s rules of engagement are:</span>
<span class="t" style="left:599.0px;top:488.0px;font-size:10.4px;color:#e4e4e4;transform:scaleX(1.0832);-webkit-text-stroke:0.25px #e4e4e4;">Your adversary&#x27;s EMCON state is:</span>
<span class="t" style="left:599.0px;top:520.2px;font-size:10.4px;color:#e4e4e4;transform:scaleX(1.1164);-webkit-text-stroke:0.25px #e4e4e4;">Local time is:</span>
<span class="t" style="left:599.0px;top:552.2px;font-size:10.4px;color:#e4e4e4;transform:scaleX(1.0942);-webkit-text-stroke:0.25px #e4e4e4;">The engagement takes place in:</span>
<span class="t" style="left:599.0px;top:584.2px;font-size:10.4px;color:#e4e4e4;transform:scaleX(1.1175);-webkit-text-stroke:0.25px #e4e4e4;">Weather is</span>
<span class="t" style="left:481.5px;top:614.6px;font-size:12.4px;color:#f0f0f0;font-weight:700;transform:scaleX(0.9383);">START</span>
<span class="t" style="left:721.7px;top:343.9px;font-size:10.2px;color:#1a1a1a;">Anzac-class frigate (Australia) with MH-60R Seahawk</span>
<span class="t" style="left:737.5px;top:375.9px;font-size:10.2px;color:#1a1a1a;transform:scaleX(1.0138);">PLA-971M Akula II [Shchuka-B] class SSN (Russia)</span>
<span class="t" style="left:702.5px;top:407.6px;font-size:10.2px;color:#1a1a1a;transform:scaleX(0.9683);">5nm</span>
<span class="t" style="left:603.3px;top:454.7px;font-size:10.2px;color:#1a1a1a;">Weapons Free: Engage any detected contacts without regards for identification</span>
<span class="t" style="left:776.6px;top:486.8px;font-size:10.2px;color:#1a1a1a;transform:scaleX(0.9774);">Sonar Passive</span>
<span class="t" style="left:673.0px;top:519.0px;font-size:10.2px;color:#1a1a1a;transform:scaleX(0.9872);">Morning (06:00)</span>
<span class="t" style="left:767.4px;top:550.9px;font-size:10.2px;color:#1a1a1a;transform:scaleX(1.0088);">Deep, cold water in the Central Atlantic</span>
<span class="t" style="left:661.3px;top:582.3px;font-size:10.2px;color:#fff;">Clear day, no clouds, no wind, avg. temperature 15 deg</span>
<span class="t" style="left:661.3px;top:594.8px;font-size:10.2px;color:#1a1a1a;">Clear day, very light clouds, wind state 1, avg. temperature 14C</span>
<span class="t" style="left:661.3px;top:607.3px;font-size:10.2px;color:#1a1a1a;">Clear day, very light clouds, wind state 2, avg. temperature 13C</span>
<span class="t" style="left:661.3px;top:619.8px;font-size:10.2px;color:#1a1a1a;">Clear day, light clouds, wind state 3, avg. temperature 12C</span>
<span class="t" style="left:661.3px;top:632.3px;font-size:10.2px;color:#1a1a1a;transform:scaleX(1.0059);">Clear day, light clouds, wind state 4, avg. temperature 11C</span>
<span class="t" style="left:661.3px;top:644.9px;font-size:10.2px;color:#1a1a1a;">Light rain, intermediate clouds, wind state 5, avg. temperature 10C</span>
<span class="t" style="left:661.3px;top:657.4px;font-size:10.2px;color:#1a1a1a;">Shower, intermediate clouds, wind state 6, avg. temperature 9C</span>
<span class="t" style="left:661.3px;top:669.9px;font-size:10.2px;color:#1a1a1a;">Heavy rain, thick cloud cover, wind state 7, avg. temperature 8C</span>
<span class="t" style="left:661.3px;top:682.4px;font-size:10.2px;color:#1a1a1a;">Downpour, thick cloud cover, wind state 8, avg. temperature 7C</span>
<span class="t" style="left:661.3px;top:694.9px;font-size:10.2px;color:#1a1a1a;">Storm, very thick cloud cover, wind state 9, avg. temperature 6C</span>
<span class="t" style="left:661.3px;top:707.5px;font-size:10.2px;color:#1a1a1a;">Flood/Monsoon, total cloud cover, wind state 9, avg. temperature 5C</span>
<div class="abs" style="left:0;top:797.5px;width:504px;height:26.5px;background:#202122"></div><div class="abs" style="left:1.5px;top:798.5px;width:501.5px;height:23.5px;background:#3f4245"></div>
<div class="abs" style="left:0;top:824px;width:1500px;height:20px;background:#404346"></div>
<svg class="abs" style="left:482px;top:801px" width="18" height="18" viewBox="0 0 18 18"><rect x="1.2" y="1.2" width="15.6" height="15.6" fill="#2d2f31" stroke="#f4f4f4" stroke-width="1.6"/><path d="M9 14 V6 M5 9 L9 4.6 L13 9" fill="none" stroke="#fff" stroke-width="2.2"/></svg>
<svg class="abs" style="left:0;top:0" width="300" height="844" viewBox="0 0 300 844"><g fill="#f2f2f2"><path d="M48.5 826.8 L57.3 834.2 L48.5 841.6Z"/><path d="M98.3 826.8 L107.1 834.2 L98.3 841.6Z"/><path d="M149.5 826.8 L158.3 834.2 L149.5 841.6Z"/><path d="M201 826.8 L209.8 834.2 L201 841.6Z"/></g></svg>
<svg class="abs" style="left:0;top:0" width="1500" height="844" viewBox="0 0 1500 844"><path d="M1225.3 804 H1451.5 M1225.3 791.5 V804 M1250.4 791.5 V804 M1275.6 791.5 V804 M1300.7 791.5 V804 M1325.8 791.5 V804 M1351.0 791.5 V804 M1376.1 791.5 V804 M1401.2 791.5 V804 M1426.3 791.5 V804 M1451.5 791.5 V804 " fill="none" stroke="#d8d8d8" stroke-width="1"/></svg>
<span class="t" style="left:8.0px;top:805.1px;font-size:9.6px;color:#efefef;transform:scaleX(0.9113);-webkit-text-stroke:0.2px #efefef;">Message Log</span>
<span class="t" style="left:2.0px;top:829.8px;font-size:9.6px;color:#c8c8c8;transform:scaleX(0.9490);">Unit View</span>
<span class="t" style="left:62.0px;top:829.8px;font-size:9.6px;color:#e8e8e8;font-weight:700;transform:scaleX(0.9133);">15 sec</span>
<span class="t" style="left:116.8px;top:829.8px;font-size:9.6px;color:#e8e8e8;font-weight:700;transform:scaleX(0.9536);">1 min</span>
<span class="t" style="left:168.0px;top:829.8px;font-size:9.6px;color:#e8e8e8;font-weight:700;transform:scaleX(0.9656);">5 min</span>
<span class="t" style="left:220.2px;top:829.8px;font-size:9.6px;color:#e8e8e8;font-weight:700;transform:scaleX(0.9570);">15 min</span>
<span class="t" style="left:1222.2px;top:779.0px;font-size:9.2px;color:#e0e0e0;transform:scaleX(1.0146);">0</span>
<span class="t" style="left:1291.3px;top:779.0px;font-size:9.2px;color:#e0e0e0;transform:scaleX(1.1340);">400</span>
<span class="t" style="left:1367.3px;top:779.0px;font-size:9.2px;color:#e0e0e0;transform:scaleX(1.1340);">700</span>
<span class="t" style="left:1439.0px;top:779.0px;font-size:9.2px;color:#e0e0e0;transform:scaleX(1.1839);">1100</span>
<span class="t" style="left:1307.0px;top:807.7px;font-size:9.2px;color:#c8c8c8;transform:scaleX(1.0842);">Nautical miles</span>
<svg class="abs" style="left:1240px;top:780px" width="260" height="64" viewBox="0 0 260 64"><defs><linearGradient id="wg" gradientUnits="userSpaceOnUse" x1="0" y1="14" x2="0" y2="54"><stop offset="0" stop-color="#cfcfcf"/><stop offset="0.55" stop-color="#939393"/><stop offset="1" stop-color="#6e6e6e"/></linearGradient><filter id="ws" x="-10%" y="-20%" width="120%" height="150%"><feGaussianBlur stdDeviation="2"/></filter></defs><text x="23" y="46" font-family="DejaVu Sans, sans-serif" font-weight="bold" font-size="36" textLength="221" lengthAdjust="spacingAndGlyphs" fill="#000" stroke="#000" stroke-width="2.600" opacity="0.55" filter="url(#ws)" transform="translate(2,3)">VseTor.org</text><text y="46" font-family="DejaVu Sans, sans-serif" font-weight="bold" fill="url(#wg)" stroke="url(#wg)" stroke-width="2.600" stroke-linejoin="round"><tspan x="23" font-size="39" textLength="26.5" lengthAdjust="spacingAndGlyphs">V</tspan><tspan x="55" font-size="32.5" textLength="36.5" lengthAdjust="spacingAndGlyphs">se</tspan><tspan x="95" font-size="39" textLength="22.5" lengthAdjust="spacingAndGlyphs">T</tspan><tspan x="121" font-size="32.5" textLength="35.5" lengthAdjust="spacingAndGlyphs">or</tspan><tspan x="162.5" font-size="36" textLength="8" lengthAdjust="spacingAndGlyphs">.</tspan><tspan x="176" font-size="32.5" textLength="67.5" lengthAdjust="spacingAndGlyphs">org</tspan></text></svg>
</body></html>
